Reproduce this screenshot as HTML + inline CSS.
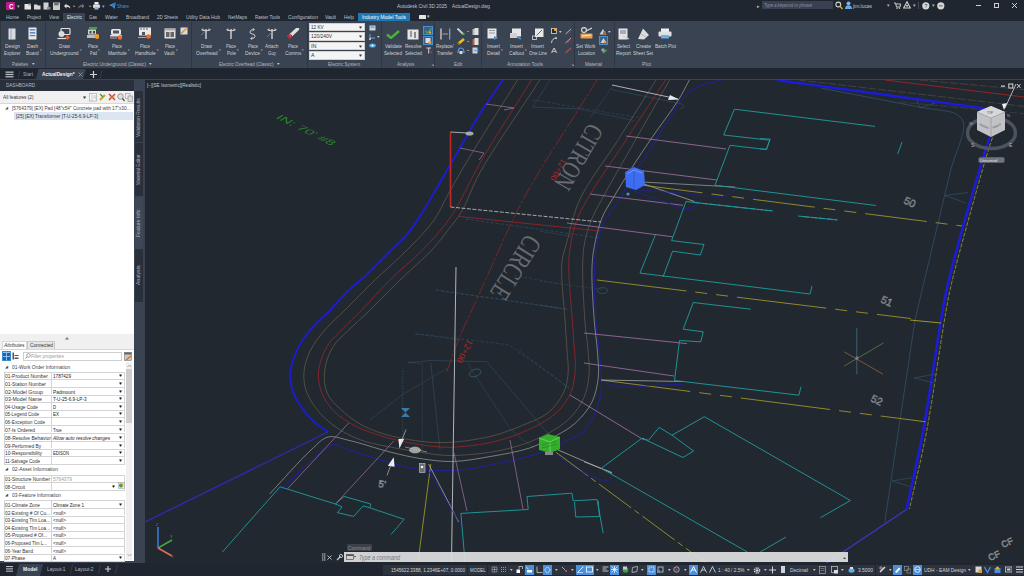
<!DOCTYPE html>
<html><head><meta charset="utf-8">
<style>
*{margin:0;padding:0;box-sizing:border-box}
html,body{width:1024px;height:576px;overflow:hidden;background:#20262f;font-family:"Liberation Sans",sans-serif}
.a{position:absolute}
.t{position:absolute;white-space:nowrap;line-height:1;font-size:6px;color:#c4c9d1}
#top{left:0;top:0;width:1024px;height:21px;background:#20262f}
#rib{left:0;top:21px;width:1024px;height:47px;background:#3a4352}
#tabs{left:0;top:68px;width:1024px;height:11px;background:#20262f}
#main{left:0;top:79px;width:1024px;height:484px;background:#3a4352}
#dwg{left:145px;top:80px;width:879px;height:482.5px;background:#222830;overflow:hidden}
#status{left:0;top:563px;width:1024px;height:13px;background:#20262f}
#panel{left:0;top:80px;width:134px;height:480.5px;background:#fff}
</style></head><body>
<div id="top" class="a"></div>
<div id="rib" class="a"></div>
<div id="tabs" class="a"></div>
<div id="main" class="a"></div>
<div id="dwg" class="a"></div>
<div id="panel" class="a"></div>
<div id="status" class="a"></div>
<div class="a" style="left:6px;top:2px;width:9px;height:8px;background:#c4168e;border-radius:1px"></div>
<div class="t" style="left:8.50px;top:3.07px;font-size:7px;color:#ffffff;font-weight:bold;font-style:normal;transform:scaleX(0.889);transform-origin:0 0;">C</div>
<div class="t" style="left:17.00px;top:3.55px;font-size:5px;color:#b8b8b8;font-weight:normal;font-style:normal;transform:scaleX(1.000);transform-origin:0 0;">▾</div>
<svg class="a" style="left:24px;top:3px;" width="8" height="7" viewBox="0 0 8 7"><rect x="0.5" y="1" width="6.5" height="5.5" fill="#e6e6e6"/><rect x="4.5" y="0.5" width="2.5" height="2" fill="#9a9a9a"/></svg>
<svg class="a" style="left:34px;top:3px;" width="7" height="7" viewBox="0 0 7 7"><path d="M0 1.5 H3 L4 2.5 H6.5 V6.5 H0Z" fill="#d8d8d8"/></svg>
<svg class="a" style="left:43px;top:2px;" width="8" height="8" viewBox="0 0 8 8"><rect x="0.5" y="0.5" width="5" height="7" fill="#d0d0d0"/><rect x="4" y="5" width="3.5" height="2.5" fill="#888"/></svg>
<svg class="a" style="left:53px;top:2px;" width="7" height="8" viewBox="0 0 7 8"><rect x="0" y="0.5" width="7" height="7.5" fill="#cacaca"/><rect x="1.2" y="0.8" width="4.5" height="2.5" fill="#6a6a6a"/></svg>
<svg class="a" style="left:63px;top:2px;" width="8" height="8" viewBox="0 0 8 8"><path d="M1 4 L3.5 1.5 V3 Q7 3 7.5 6.5 Q6 4.8 3.5 4.8 V6.5Z" fill="#dadada"/></svg>
<div class="t" style="left:72.50px;top:3.55px;font-size:5px;color:#b0b0b0;font-weight:normal;font-style:normal;transform:scaleX(1.133);transform-origin:0 0;">•</div>
<svg class="a" style="left:78px;top:2px;" width="7" height="8" viewBox="0 0 7 8"><path d="M6.5 4 L4 1.5 V3 Q0.5 3 0 6.5 Q1.5 4.8 4 4.8 V6.5Z" fill="#6b717a"/></svg>
<div class="t" style="left:88.50px;top:3.55px;font-size:5px;color:#b0b0b0;font-weight:normal;font-style:normal;transform:scaleX(1.133);transform-origin:0 0;">•</div>
<svg class="a" style="left:93px;top:2px;" width="7" height="8" viewBox="0 0 7 8"><rect x="1.5" y="0" width="4" height="2.5" fill="#eee"/><rect x="0" y="2.5" width="7" height="3.5" rx="1" fill="#dedede"/><rect x="1.5" y="5" width="4" height="2.5" fill="#8fb8e0"/></svg>
<div class="t" style="left:102.00px;top:3.55px;font-size:5px;color:#9aa0a8;font-weight:normal;font-style:normal;transform:scaleX(1.000);transform-origin:0 0;">▾</div>
<svg class="a" style="left:109px;top:2px;" width="7" height="7" viewBox="0 0 7 7"><path d="M0 3.2 L7 0 L5.5 7 L3.2 4.5 Z" fill="#3f8fd8"/><path d="M3.2 4.5 L7 0" stroke="#20262f" stroke-width="0.5"/></svg>
<div class="t" style="left:117.00px;top:3.76px;font-size:5.6px;color:#4f93d6;font-weight:normal;font-style:normal;transform:scaleX(0.803);transform-origin:0 0;">Share</div>
<div class="t" style="left:397.00px;top:3.76px;font-size:5.6px;color:#c0c5cd;font-weight:normal;font-style:normal;transform:scaleX(0.860);transform-origin:0 0;">Autodesk Civil 3D 2025</div>
<div class="t" style="left:452.00px;top:3.76px;font-size:5.6px;color:#c0c5cd;font-weight:normal;font-style:normal;transform:scaleX(0.849);transform-origin:0 0;">ActualDesign.dwg</div>
<div class="t" style="left:757.00px;top:4.05px;font-size:5px;color:#b8b8b8;font-weight:normal;font-style:normal;transform:scaleX(1.000);transform-origin:0 0;">▸</div>
<div class="a" style="left:762px;top:1px;width:71px;height:8px;background:#38414f;"></div>
<div class="t" style="left:764.00px;top:3.45px;font-size:5.2px;color:#8a929f;font-weight:normal;font-style:italic;transform:scaleX(0.805);transform-origin:0 0;">Type a keyword or phrase</div>
<svg class="a" style="left:835px;top:1px;" width="8" height="9" viewBox="0 0 8 9"><circle cx="3.3" cy="3.5" r="2.4" fill="none" stroke="#cfcfcf" stroke-width="1.1"/><path d="M5 5.3 L7.5 8" stroke="#d8b040" stroke-width="1.3"/></svg>
<svg class="a" style="left:845px;top:1px;" width="7" height="8" viewBox="0 0 7 8"><circle cx="3.5" cy="2.3" r="1.9" fill="#7ab4ec"/><path d="M0 8 Q0 4.2 3.5 4.2 Q7 4.2 7 8Z" fill="#6aa8e8"/></svg>
<div class="t" style="left:853.00px;top:3.76px;font-size:5.6px;color:#c0c5cd;font-weight:normal;font-style:normal;transform:scaleX(0.873);transform-origin:0 0;">jim.lucas</div>
<div class="t" style="left:887.00px;top:3.79px;font-size:4.5px;color:#b0b0b0;font-weight:normal;font-style:normal;transform:scaleX(1.000);transform-origin:0 0;">▾</div>
<svg class="a" style="left:894px;top:2px;" width="7" height="7" viewBox="0 0 7 7"><path d="M0 1 H1.5 L2.5 5 H6 L6.8 2 H2" fill="none" stroke="#d0d0d0" stroke-width="1"/><circle cx="3" cy="6.3" r="0.7" fill="#d0d0d0"/><circle cx="5.5" cy="6.3" r="0.7" fill="#d0d0d0"/></svg>
<svg class="a" style="left:903px;top:1px;" width="8" height="8" viewBox="0 0 8 8"><path d="M4 0.8 L7.4 7 L0.6 7 Z" fill="none" stroke="#d4d4d4" stroke-width="1.1"/><circle cx="4" cy="4.8" r="1" fill="#d4d4d4"/></svg>
<div class="t" style="left:912.50px;top:3.79px;font-size:4.5px;color:#b0b0b0;font-weight:normal;font-style:normal;transform:scaleX(1.000);transform-origin:0 0;">▾</div>
<div class="a" style="left:918px;top:2px;width:1px;height:7px;background:#454d5a;"></div>
<svg class="a" style="left:922px;top:1.5px;" width="8" height="8" viewBox="0 0 8 8"><circle cx="3.8" cy="3.8" r="3.6" fill="#d6d6d6"/><text x="2.4" y="6" font-size="5" fill="#333" font-family="Liberation Sans">?</text></svg>
<div class="t" style="left:931.50px;top:3.79px;font-size:4.5px;color:#b0b0b0;font-weight:normal;font-style:normal;transform:scaleX(1.000);transform-origin:0 0;">▾</div>
<svg class="a" style="left:937px;top:1.5px;" width="8" height="8" viewBox="0 0 8 8"><circle cx="3.8" cy="3.8" r="3.6" fill="#d6d6d6"/><rect x="2" y="3" width="3.6" height="1.6" fill="#888"/></svg>
<div class="a" style="left:976px;top:5px;width:5px;height:1px;background:#cfcfcf;"></div>
<div class="a" style="left:994px;top:3px;width:5px;height:5px;background:transparent;border:1px solid #cfcfcf"></div>
<svg class="a" style="left:1011px;top:2px;" width="7" height="7" viewBox="0 0 7 7"><path d="M1 1 L6 6 M6 1 L1 6" stroke="#cfcfcf" stroke-width="1"/></svg>
<div class="a" style="left:63px;top:13px;width:22px;height:8px;background:#3a4352;"></div>
<div class="a" style="left:358px;top:13px;width:52px;height:8px;background:#1e76b3;"></div>
<div class="t" style="left:6.00px;top:14.76px;font-size:5.6px;color:#bcc2cb;font-weight:normal;font-style:normal;transform:scaleX(0.871);transform-origin:0 0;">Home</div>
<div class="t" style="left:27.00px;top:14.76px;font-size:5.6px;color:#bcc2cb;font-weight:normal;font-style:normal;transform:scaleX(0.804);transform-origin:0 0;">Project</div>
<div class="t" style="left:49.00px;top:14.76px;font-size:5.6px;color:#bcc2cb;font-weight:normal;font-style:normal;transform:scaleX(0.831);transform-origin:0 0;">View</div>
<div class="t" style="left:89.00px;top:14.76px;font-size:5.6px;color:#bcc2cb;font-weight:normal;font-style:normal;transform:scaleX(0.779);transform-origin:0 0;">Gas</div>
<div class="t" style="left:105.00px;top:14.76px;font-size:5.6px;color:#bcc2cb;font-weight:normal;font-style:normal;transform:scaleX(0.883);transform-origin:0 0;">Water</div>
<div class="t" style="left:126.00px;top:14.76px;font-size:5.6px;color:#bcc2cb;font-weight:normal;font-style:normal;transform:scaleX(0.840);transform-origin:0 0;">Broadband</div>
<div class="t" style="left:157.00px;top:14.76px;font-size:5.6px;color:#bcc2cb;font-weight:normal;font-style:normal;transform:scaleX(0.804);transform-origin:0 0;">2D Sheets</div>
<div class="t" style="left:186.00px;top:14.76px;font-size:5.6px;color:#bcc2cb;font-weight:normal;font-style:normal;transform:scaleX(0.875);transform-origin:0 0;">Utility Data Hub</div>
<div class="t" style="left:228.00px;top:14.76px;font-size:5.6px;color:#bcc2cb;font-weight:normal;font-style:normal;transform:scaleX(0.849);transform-origin:0 0;">NetMaps</div>
<div class="t" style="left:255.00px;top:14.76px;font-size:5.6px;color:#bcc2cb;font-weight:normal;font-style:normal;transform:scaleX(0.806);transform-origin:0 0;">Raster Tools</div>
<div class="t" style="left:288.00px;top:14.76px;font-size:5.6px;color:#bcc2cb;font-weight:normal;font-style:normal;transform:scaleX(0.901);transform-origin:0 0;">Configuration</div>
<div class="t" style="left:325.00px;top:14.76px;font-size:5.6px;color:#bcc2cb;font-weight:normal;font-style:normal;transform:scaleX(0.891);transform-origin:0 0;">Vault</div>
<div class="t" style="left:344.00px;top:14.76px;font-size:5.6px;color:#bcc2cb;font-weight:normal;font-style:normal;transform:scaleX(0.868);transform-origin:0 0;">Help</div>
<div class="t" style="left:67.00px;top:14.76px;font-size:5.6px;color:#dde3ea;font-weight:normal;font-style:normal;transform:scaleX(0.818);transform-origin:0 0;">Electric</div>
<div class="t" style="left:362.00px;top:14.76px;font-size:5.6px;color:#ffffff;font-weight:normal;font-style:normal;transform:scaleX(0.859);transform-origin:0 0;">Industry Model Tools</div>
<div class="a" style="left:419px;top:15px;width:7px;height:4px;background:#e4e4e4;border-radius:0.5px"></div>
<div class="t" style="left:427.00px;top:15.29px;font-size:4.5px;color:#c0c0c0;font-weight:normal;font-style:normal;transform:scaleX(1.000);transform-origin:0 0;">▾</div>
<div class="a" style="left:45px;top:22px;width:1px;height:46px;background:#2f3641;"></div>
<div class="a" style="left:191px;top:22px;width:1px;height:46px;background:#2f3641;"></div>
<div class="a" style="left:307px;top:22px;width:1px;height:46px;background:#2f3641;"></div>
<div class="a" style="left:381px;top:22px;width:1px;height:46px;background:#2f3641;"></div>
<div class="a" style="left:434px;top:22px;width:1px;height:46px;background:#2f3641;"></div>
<div class="a" style="left:481px;top:22px;width:1px;height:46px;background:#2f3641;"></div>
<div class="a" style="left:574px;top:22px;width:1px;height:46px;background:#2f3641;"></div>
<div class="a" style="left:614px;top:22px;width:1px;height:46px;background:#2f3641;"></div>
<div class="a" style="left:0px;top:21px;width:1px;height:47px;background:#2f3641;"></div>
<svg class="a" style="left:8px;top:28px;" width="8" height="12" viewBox="0 0 8 12"><rect x="0.5" y="0.5" width="7" height="11" fill="#d8dadd"/><rect x="2.5" y="1" width="1" height="10" fill="#9ab"/></svg>
<svg class="a" style="left:28px;top:27px;" width="9" height="13" viewBox="0 0 9 13"><rect x="0.5" y="0.5" width="8" height="12" fill="#e6e8ea"/><rect x="1.8" y="2" width="5.4" height="1.6" fill="#5b8fd0"/><rect x="1.8" y="5" width="5.4" height="1.6" fill="#5b8fd0"/><rect x="1.8" y="8" width="5.4" height="1.2" fill="#777"/></svg>
<div class="t" style="left:5.00px;top:42.91px;font-size:6.1px;color:#ccd1d8;font-weight:normal;font-style:normal;transform:scaleX(0.791);transform-origin:0 0;">Design</div>
<div class="t" style="left:4.25px;top:49.71px;font-size:6.1px;color:#ccd1d8;font-weight:normal;font-style:normal;transform:scaleX(0.727);transform-origin:0 0;">Explorer</div>
<div class="t" style="left:27.00px;top:42.91px;font-size:6.1px;color:#ccd1d8;font-weight:normal;font-style:normal;transform:scaleX(0.773);transform-origin:0 0;">Dash</div>
<div class="t" style="left:26.20px;top:49.71px;font-size:6.1px;color:#ccd1d8;font-weight:normal;font-style:normal;transform:scaleX(0.775);transform-origin:0 0;">Board</div>
<div class="t" style="left:40.00px;top:49.13px;font-size:3.2px;color:#c8c8c8;font-weight:normal;font-style:normal;transform:scaleX(1.000);transform-origin:0 0;">▾</div>
<div class="t" style="left:12.00px;top:60.76px;font-size:6px;color:#b4b9c0;font-weight:normal;font-style:normal;transform:scaleX(0.738);transform-origin:0 0;">Palettes</div>
<div class="t" style="left:32.00px;top:62.58px;font-size:3.5px;color:#c8c8c8;font-weight:normal;font-style:normal;transform:scaleX(1.250);transform-origin:0 0;">▾</div>
<svg class="a" style="left:57px;top:28px;" width="14" height="12" viewBox="0 0 14 12"><rect x="4" y="0.5" width="9" height="6" rx="1" fill="none" stroke="#e0e0e0" stroke-width="1.2"/><circle cx="4.5" cy="6" r="3" fill="#dcdcdc"/><path d="M0.5 10.5 H9" stroke="#e0e0e0" stroke-width="1.2"/><path d="M10.5 7 L13 9.5 L10.5 12 L8 9.5Z" fill="#e8602c"/></svg>
<svg class="a" style="left:87px;top:27px;" width="12" height="13" viewBox="0 0 12 13"><rect x="2" y="0" width="8" height="2" fill="#3fa53f"/><rect x="1" y="2.5" width="8" height="5" fill="#cfcfcf"/><rect x="2.5" y="4" width="2" height="2.5" fill="#444"/><rect x="6" y="4" width="2" height="2.5" fill="#444"/><rect x="0" y="8" width="9" height="3" fill="#bdbdbd"/><circle cx="10" cy="9.5" r="2.4" fill="#f09a28"/></svg>
<svg class="a" style="left:110px;top:28px;" width="13" height="12" viewBox="0 0 13 12"><rect x="1" y="1" width="10" height="6" rx="1.5" fill="#e6e6e6"/><rect x="3" y="2.5" width="6" height="3" fill="#555"/><rect x="0" y="7" width="12" height="1.5" fill="#e0e0e0"/><path d="M0 10 H7" stroke="#c0a0a0" stroke-width="1"/><circle cx="10" cy="9.5" r="2.2" fill="#e8702c"/></svg>
<svg class="a" style="left:138px;top:27px;" width="14" height="13" viewBox="0 0 14 13"><rect x="1" y="0.5" width="12" height="8" fill="#e8e8e8"/><rect x="2" y="1.5" width="2" height="1" fill="#666"/><rect x="5" y="1.5" width="2" height="1" fill="#666"/><rect x="8" y="1.5" width="2" height="1" fill="#666"/><rect x="4" y="5" width="3" height="3" fill="#555"/><path d="M0 10.5 H8" stroke="#c0a0a0" stroke-width="1"/><circle cx="10.5" cy="9.5" r="2.3" fill="#e8702c"/></svg>
<svg class="a" style="left:164px;top:28px;" width="12" height="11" viewBox="0 0 12 11"><rect x="0.5" y="0.5" width="11" height="10" fill="#dedede"/><rect x="0.5" y="0.5" width="11" height="2" fill="#aaa"/><rect x="2" y="4" width="3.5" height="5" fill="#666"/><rect x="6.5" y="4" width="3.5" height="5" fill="#666"/></svg>
<svg class="a" style="left:180px;top:27px;" width="8" height="8" viewBox="0 0 8 8"><rect x="0.5" y="0.5" width="7" height="7" fill="#d9dde2"/><path d="M1 7 L7 1" stroke="#e8a040" stroke-width="1.5"/><path d="M1 6 L5 2" stroke="#6aa8e8" stroke-width="0.8"/></svg>
<div class="t" style="left:58.70px;top:42.91px;font-size:6.1px;color:#ccd1d8;font-weight:normal;font-style:normal;transform:scaleX(0.773);transform-origin:0 0;">Draw</div>
<div class="t" style="left:49.90px;top:49.71px;font-size:6.1px;color:#ccd1d8;font-weight:normal;font-style:normal;transform:scaleX(0.804);transform-origin:0 0;">Underground</div>
<div class="t" style="left:79.70px;top:49.13px;font-size:3.2px;color:#c8c8c8;font-weight:normal;font-style:normal;transform:scaleX(1.000);transform-origin:0 0;">▾</div>
<div class="t" style="left:88.00px;top:42.91px;font-size:6.1px;color:#ccd1d8;font-weight:normal;font-style:normal;transform:scaleX(0.656);transform-origin:0 0;">Place</div>
<div class="t" style="left:89.50px;top:49.71px;font-size:6.1px;color:#ccd1d8;font-weight:normal;font-style:normal;transform:scaleX(0.646);transform-origin:0 0;">Pad</div>
<div class="t" style="left:97.70px;top:49.13px;font-size:3.2px;color:#c8c8c8;font-weight:normal;font-style:normal;transform:scaleX(1.000);transform-origin:0 0;">▾</div>
<div class="t" style="left:112.00px;top:42.91px;font-size:6.1px;color:#ccd1d8;font-weight:normal;font-style:normal;transform:scaleX(0.656);transform-origin:0 0;">Place</div>
<div class="t" style="left:107.65px;top:49.71px;font-size:6.1px;color:#ccd1d8;font-weight:normal;font-style:normal;transform:scaleX(0.799);transform-origin:0 0;">Manhole</div>
<div class="t" style="left:127.55px;top:49.13px;font-size:3.2px;color:#c8c8c8;font-weight:normal;font-style:normal;transform:scaleX(1.000);transform-origin:0 0;">▾</div>
<div class="t" style="left:140.00px;top:42.91px;font-size:6.1px;color:#ccd1d8;font-weight:normal;font-style:normal;transform:scaleX(0.656);transform-origin:0 0;">Place</div>
<div class="t" style="left:134.60px;top:49.71px;font-size:6.1px;color:#ccd1d8;font-weight:normal;font-style:normal;transform:scaleX(0.797);transform-origin:0 0;">Handhole</div>
<div class="t" style="left:156.60px;top:49.13px;font-size:3.2px;color:#c8c8c8;font-weight:normal;font-style:normal;transform:scaleX(1.000);transform-origin:0 0;">▾</div>
<div class="t" style="left:164.50px;top:42.91px;font-size:6.1px;color:#ccd1d8;font-weight:normal;font-style:normal;transform:scaleX(0.656);transform-origin:0 0;">Place</div>
<div class="t" style="left:164.25px;top:49.71px;font-size:6.1px;color:#ccd1d8;font-weight:normal;font-style:normal;transform:scaleX(0.781);transform-origin:0 0;">Vault</div>
<div class="t" style="left:175.95px;top:49.13px;font-size:3.2px;color:#c8c8c8;font-weight:normal;font-style:normal;transform:scaleX(1.000);transform-origin:0 0;">▾</div>
<div class="t" style="left:83.00px;top:60.76px;font-size:6px;color:#b4b9c0;font-weight:normal;font-style:normal;transform:scaleX(0.774);transform-origin:0 0;">Electric Underground (Classic)</div>
<div class="t" style="left:149.00px;top:62.58px;font-size:3.5px;color:#c8c8c8;font-weight:normal;font-style:normal;transform:scaleX(1.250);transform-origin:0 0;">▾</div>
<svg class="a" style="left:201px;top:28px;" width="10" height="12" viewBox="0 0 10 12"><path d="M5 1 V11" stroke="#d4d4d4" stroke-width="1.4"/><path d="M0.5 1.5 Q5 4 9.5 1.5" stroke="#d4d4d4" stroke-width="1.1" fill="none"/><path d="M2 0.5 V3 M8 0.5 V3" stroke="#d4d4d4" stroke-width="0.9"/><path d="M0 7 L4 3.5" stroke="#5a8ad8" stroke-width="0.8"/></svg>
<svg class="a" style="left:226px;top:28px;" width="10" height="12" viewBox="0 0 10 12"><path d="M5 1 V11" stroke="#d4d4d4" stroke-width="1.4"/><path d="M0.5 1.5 Q5 4 9.5 1.5" stroke="#d4d4d4" stroke-width="1.1" fill="none"/><path d="M2 0.5 V3 M8 0.5 V3" stroke="#d4d4d4" stroke-width="0.9"/></svg>
<svg class="a" style="left:248px;top:28px;" width="9" height="12" viewBox="0 0 9 12"><path d="M6 1.5 Q2 1.5 2 4 Q2 6 4.5 6 Q7 6 7 8.5 Q7 10.5 3 10.5" fill="none" stroke="#cfcfcf" stroke-width="1"/><path d="M4.5 0 L6.5 1.5 L4.5 3 M4.5 9 L2.5 10.5 L4.5 12" fill="none" stroke="#cfcfcf" stroke-width="0.8"/></svg>
<svg class="a" style="left:267px;top:28px;" width="10" height="12" viewBox="0 0 10 12"><path d="M5 1 V11" stroke="#d4d4d4" stroke-width="1.4"/><path d="M0.5 1.5 Q5 4 9.5 1.5" stroke="#d4d4d4" stroke-width="1.1" fill="none"/><path d="M2 0.5 V3 M8 0.5 V3" stroke="#d4d4d4" stroke-width="0.9"/><path d="M0 9 L5 4" stroke="#5a8ad8" stroke-width="0.8"/></svg>
<svg class="a" style="left:287px;top:28px;" width="13" height="11" viewBox="0 0 13 11"><path d="M2.5 8.5 L10.5 1" stroke="#e0e0e0" stroke-width="3.4" stroke-linecap="round"/><circle cx="3" cy="8.5" r="2.2" fill="#c02020"/><circle cx="3.3" cy="8.1" r="0.8" fill="#e060c0"/></svg>
<div class="t" style="left:201.10px;top:42.91px;font-size:6.1px;color:#ccd1d8;font-weight:normal;font-style:normal;transform:scaleX(0.773);transform-origin:0 0;">Draw</div>
<div class="t" style="left:195.85px;top:49.71px;font-size:6.1px;color:#ccd1d8;font-weight:normal;font-style:normal;transform:scaleX(0.803);transform-origin:0 0;">Overhead</div>
<div class="t" style="left:218.55px;top:49.13px;font-size:3.2px;color:#c8c8c8;font-weight:normal;font-style:normal;transform:scaleX(1.000);transform-origin:0 0;">▾</div>
<div class="t" style="left:226.00px;top:42.91px;font-size:6.1px;color:#ccd1d8;font-weight:normal;font-style:normal;transform:scaleX(0.656);transform-origin:0 0;">Place</div>
<div class="t" style="left:226.50px;top:49.71px;font-size:6.1px;color:#ccd1d8;font-weight:normal;font-style:normal;transform:scaleX(0.738);transform-origin:0 0;">Pole</div>
<div class="t" style="left:236.70px;top:49.13px;font-size:3.2px;color:#c8c8c8;font-weight:normal;font-style:normal;transform:scaleX(1.000);transform-origin:0 0;">▾</div>
<div class="t" style="left:247.50px;top:42.91px;font-size:6.1px;color:#ccd1d8;font-weight:normal;font-style:normal;transform:scaleX(0.656);transform-origin:0 0;">Place</div>
<div class="t" style="left:245.00px;top:49.71px;font-size:6.1px;color:#ccd1d8;font-weight:normal;font-style:normal;transform:scaleX(0.805);transform-origin:0 0;">Device</div>
<div class="t" style="left:261.20px;top:49.13px;font-size:3.2px;color:#c8c8c8;font-weight:normal;font-style:normal;transform:scaleX(1.000);transform-origin:0 0;">▾</div>
<div class="t" style="left:264.95px;top:42.91px;font-size:6.1px;color:#ccd1d8;font-weight:normal;font-style:normal;transform:scaleX(0.781);transform-origin:0 0;">Attach</div>
<div class="t" style="left:267.70px;top:49.71px;font-size:6.1px;color:#ccd1d8;font-weight:normal;font-style:normal;transform:scaleX(0.715);transform-origin:0 0;">Guy</div>
<div class="t" style="left:287.80px;top:42.91px;font-size:6.1px;color:#ccd1d8;font-weight:normal;font-style:normal;transform:scaleX(0.656);transform-origin:0 0;">Place</div>
<div class="t" style="left:284.55px;top:49.71px;font-size:6.1px;color:#ccd1d8;font-weight:normal;font-style:normal;transform:scaleX(0.786);transform-origin:0 0;">Comms</div>
<div class="t" style="left:302.25px;top:49.13px;font-size:3.2px;color:#c8c8c8;font-weight:normal;font-style:normal;transform:scaleX(1.000);transform-origin:0 0;">▾</div>
<div class="t" style="left:218.60px;top:60.76px;font-size:6px;color:#b4b9c0;font-weight:normal;font-style:normal;transform:scaleX(0.750);transform-origin:0 0;">Electric Overhead (Classic)</div>
<div class="t" style="left:277.00px;top:62.58px;font-size:3.5px;color:#c8c8c8;font-weight:normal;font-style:normal;transform:scaleX(1.250);transform-origin:0 0;">▾</div>
<div class="a" style="left:308.5px;top:22.5px;width:56px;height:8.7px;background:#f4f4f4;border:0.5px solid #d0d0d0"></div>
<div class="t" style="left:311.00px;top:24.66px;font-size:5.6px;color:#333333;font-weight:normal;font-style:normal;transform:scaleX(0.820);transform-origin:0 0;">12 KV</div>
<div class="t" style="left:358.50px;top:24.75px;font-size:5px;color:#333;font-weight:normal;font-style:normal;transform:scaleX(1.167);transform-origin:0 0;">▾</div>
<div class="a" style="left:308.5px;top:32px;width:56px;height:8.7px;background:#f4f4f4;border:0.5px solid #d0d0d0"></div>
<div class="t" style="left:311.00px;top:34.16px;font-size:5.6px;color:#333333;font-weight:normal;font-style:normal;transform:scaleX(0.877);transform-origin:0 0;">120/240V</div>
<div class="t" style="left:358.50px;top:34.25px;font-size:5px;color:#333;font-weight:normal;font-style:normal;transform:scaleX(1.167);transform-origin:0 0;">▾</div>
<div class="a" style="left:308.5px;top:41.7px;width:56px;height:8.7px;background:#f4f4f4;border:0.5px solid #d0d0d0"></div>
<div class="t" style="left:311.00px;top:43.86px;font-size:5.6px;color:#333333;font-weight:normal;font-style:normal;transform:scaleX(0.983);transform-origin:0 0;">IN</div>
<div class="t" style="left:358.50px;top:43.95px;font-size:5px;color:#333;font-weight:normal;font-style:normal;transform:scaleX(1.167);transform-origin:0 0;">▾</div>
<div class="a" style="left:308.5px;top:51.2px;width:56px;height:8.7px;background:#f4f4f4;border:0.5px solid #d0d0d0"></div>
<div class="t" style="left:311.00px;top:53.36px;font-size:5.6px;color:#333333;font-weight:normal;font-style:normal;transform:scaleX(0.937);transform-origin:0 0;">A</div>
<div class="t" style="left:358.50px;top:53.45px;font-size:5px;color:#333;font-weight:normal;font-style:normal;transform:scaleX(1.167);transform-origin:0 0;">▾</div>
<svg class="a" style="left:369px;top:25px;" width="7" height="6" viewBox="0 0 7 6"><rect x="0.5" y="0.5" width="6" height="5" fill="#c8d4e0"/><rect x="1.5" y="1.5" width="4" height="1.2" fill="#5a8ad8"/></svg>
<svg class="a" style="left:369px;top:34px;" width="8" height="6" viewBox="0 0 8 6"><path d="M1 0 V4 H6" stroke="#6aa8e8" stroke-width="1" fill="none"/><circle cx="1" cy="5" r="1" fill="#ddd"/></svg>
<div class="t" style="left:377.00px;top:34.94px;font-size:4px;color:#c8c8c8;font-weight:normal;font-style:normal;transform:scaleX(1.250);transform-origin:0 0;">▾</div>
<svg class="a" style="left:369px;top:43px;" width="7" height="5" viewBox="0 0 7 5"><ellipse cx="3.5" cy="2.5" rx="3.3" ry="2" fill="#5aa8e8"/><ellipse cx="3.5" cy="2.5" rx="1" ry="1" fill="#fff"/></svg>
<div class="t" style="left:328.00px;top:60.76px;font-size:6px;color:#b4b9c0;font-weight:normal;font-style:normal;transform:scaleX(0.774);transform-origin:0 0;">Electric System</div>
<svg class="a" style="left:386px;top:30px;" width="14" height="9" viewBox="0 0 14 9"><path d="M1 4.5 L5 8 L13 1" fill="none" stroke="#4cb03c" stroke-width="2.4"/></svg>
<svg class="a" style="left:407px;top:29px;" width="12" height="11" viewBox="0 0 12 11"><rect x="0.5" y="0.5" width="11" height="10" fill="#e4e4e4"/><rect x="3" y="2" width="2" height="6" fill="#999"/><rect x="7" y="3" width="2" height="6" fill="#888"/></svg>
<div class="a" style="left:423.3px;top:26.4px;width:10px;height:8.8px;background:#3f5f84;border:0.8px solid #4a90d0"></div>
<svg class="a" style="left:425px;top:28px;" width="7" height="6" viewBox="0 0 7 6"><path d="M0.5 3 L2.5 5 L6.5 0.5" fill="none" stroke="#4cb03c" stroke-width="1.2"/><circle cx="5" cy="4.5" r="1.2" fill="#f0a030"/></svg>
<div class="a" style="left:423.3px;top:36.4px;width:10px;height:8.8px;background:#3f5f84;border:0.8px solid #4a90d0"></div>
<svg class="a" style="left:425px;top:38px;" width="7" height="6" viewBox="0 0 7 6"><rect x="0.5" y="0" width="5" height="5" fill="#ddd"/><circle cx="5" cy="4.5" r="1.5" fill="#f0a030"/></svg>
<svg class="a" style="left:426px;top:47px;" width="6" height="7" viewBox="0 0 6 7"><path d="M0.5 1 H5 M2.7 1 V6.5" stroke="#d0d0d0" stroke-width="1"/><circle cx="5" cy="5" r="0.8" fill="#e04040"/></svg>
<div class="t" style="left:384.50px;top:42.91px;font-size:6.1px;color:#ccd1d8;font-weight:normal;font-style:normal;transform:scaleX(0.788);transform-origin:0 0;">Validate</div>
<div class="t" style="left:384.00px;top:49.71px;font-size:6.1px;color:#ccd1d8;font-weight:normal;font-style:normal;transform:scaleX(0.759);transform-origin:0 0;">Selected</div>
<div class="t" style="left:405.20px;top:42.91px;font-size:6.1px;color:#ccd1d8;font-weight:normal;font-style:normal;transform:scaleX(0.754);transform-origin:0 0;">Resolve</div>
<div class="t" style="left:405.00px;top:49.71px;font-size:6.1px;color:#ccd1d8;font-weight:normal;font-style:normal;transform:scaleX(0.717);transform-origin:0 0;">Selected</div>
<div class="t" style="left:397.00px;top:60.76px;font-size:6px;color:#b4b9c0;font-weight:normal;font-style:normal;transform:scaleX(0.774);transform-origin:0 0;">Analysis</div>
<div class="t" style="left:430.50px;top:62.54px;font-size:4px;color:#c8c8c8;font-weight:normal;font-style:normal;transform:scaleX(1.000);transform-origin:0 0;">↘</div>
<svg class="a" style="left:440px;top:28px;" width="11" height="12" viewBox="0 0 11 12"><path d="M1 0.5 V11.5" stroke="#e0e0e0" stroke-width="1.2"/><path d="M9.7 0.5 V11.5" stroke="#78a8e0" stroke-width="1.2"/><path d="M2.5 6 H8" stroke="#bbb" stroke-width="0.8"/></svg>
<svg class="a" style="left:457px;top:28px;" width="8" height="7" viewBox="0 0 8 7"><path d="M0.5 0.5 L6 6" stroke="#d0d0d0" stroke-width="1.8"/><circle cx="6.5" cy="6" r="1.2" fill="#4cb03c"/></svg>
<svg class="a" style="left:457px;top:38px;" width="8" height="7" viewBox="0 0 8 7"><path d="M1 6 L7 1" stroke="#e8c020" stroke-width="2.6"/><circle cx="1.5" cy="5.5" r="1" fill="#555"/></svg>
<svg class="a" style="left:457px;top:47px;" width="8" height="7" viewBox="0 0 8 7"><path d="M1 6 Q1 1 4 1 Q7 1 7 6" fill="none" stroke="#5aa0e8" stroke-width="1.2"/><rect x="2.5" y="4" width="3" height="3" fill="#ddd"/></svg>
<div class="t" style="left:467.00px;top:29.54px;font-size:4px;color:#c8c8c8;font-weight:normal;font-style:normal;transform:scaleX(1.422);transform-origin:0 0;">•</div>
<div class="t" style="left:467.00px;top:39.54px;font-size:4px;color:#c8c8c8;font-weight:normal;font-style:normal;transform:scaleX(1.422);transform-origin:0 0;">•</div>
<div class="t" style="left:467.00px;top:49.04px;font-size:4px;color:#c8c8c8;font-weight:normal;font-style:normal;transform:scaleX(1.422);transform-origin:0 0;">•</div>
<svg class="a" style="left:472px;top:28px;" width="7" height="8" viewBox="0 0 7 8"><rect x="0.5" y="1" width="4" height="6" fill="#bbb"/><rect x="2.5" y="0" width="4" height="7" fill="#e0e0e0"/></svg>
<svg class="a" style="left:472px;top:38px;" width="7" height="8" viewBox="0 0 7 8"><rect x="0.5" y="1" width="4" height="6" fill="#c06030"/><rect x="2.5" y="0" width="4" height="7" fill="#e0e0e0"/></svg>
<svg class="a" style="left:472px;top:47px;" width="7" height="7" viewBox="0 0 7 7"><rect x="0.5" y="0.5" width="5" height="6" fill="#d0d0d0"/><path d="M2 3.5 H6.5" stroke="#5aa0e8" stroke-width="1.2"/></svg>
<div class="t" style="left:436.20px;top:42.91px;font-size:6.1px;color:#ccd1d8;font-weight:normal;font-style:normal;transform:scaleX(0.731);transform-origin:0 0;">Replace/</div>
<div class="t" style="left:437.10px;top:49.71px;font-size:6.1px;color:#ccd1d8;font-weight:normal;font-style:normal;transform:scaleX(0.703);transform-origin:0 0;">Transfer</div>
<div class="t" style="left:453.80px;top:60.76px;font-size:6px;color:#b4b9c0;font-weight:normal;font-style:normal;transform:scaleX(0.793);transform-origin:0 0;">Edit</div>
<svg class="a" style="left:487px;top:28px;" width="12" height="12" viewBox="0 0 12 12"><rect x="0.5" y="0.5" width="9" height="10" fill="#e6e6e6"/><rect x="2" y="2" width="6" height="1" fill="#999"/><rect x="2" y="4.5" width="6" height="1" fill="#999"/><path d="M7 8 L11 10 L7 12Z" fill="#4a90e0"/></svg>
<svg class="a" style="left:510px;top:28px;" width="12" height="12" viewBox="0 0 12 12"><rect x="2" y="0.5" width="9" height="8" fill="#e6e6e6"/><rect x="0" y="5" width="7" height="5" fill="#d0d0d0"/><path d="M7 9 L11 11" stroke="#4a90e0" stroke-width="1.5"/></svg>
<svg class="a" style="left:532px;top:28px;" width="12" height="12" viewBox="0 0 12 12"><rect x="3" y="0.5" width="8.5" height="8.5" fill="#e8e8e8"/><path d="M4.5 7.5 L10 2" stroke="#666" stroke-width="1"/><rect x="0.5" y="8" width="4" height="3.5" fill="none" stroke="#ddd" stroke-width="0.8"/></svg>
<svg class="a" style="left:551px;top:28px;" width="6" height="6" viewBox="0 0 6 6"><rect x="0.5" y="0.5" width="5" height="5" fill="#2a2a2a" stroke="#ddd" stroke-width="0.8"/><rect x="3" y="0.5" width="2.5" height="2.5" fill="#e0a030"/></svg>
<div class="t" style="left:558.50px;top:29.54px;font-size:4px;color:#c8c8c8;font-weight:normal;font-style:normal;transform:scaleX(1.250);transform-origin:0 0;">▾</div>
<svg class="a" style="left:551px;top:37px;" width="6" height="7" viewBox="0 0 6 7"><path d="M0.5 6 Q1 1 5.5 1" fill="none" stroke="#d8d8d8" stroke-width="0.9"/><circle cx="5" cy="1.2" r="0.9" fill="#ddd"/></svg>
<div class="t" style="left:551.00px;top:47.07px;font-size:7px;color:#d8d8d8;font-weight:normal;font-style:normal;transform:scaleX(1.284);transform-origin:0 0;">A</div>
<svg class="a" style="left:565px;top:28px;" width="7" height="7" viewBox="0 0 7 7"><path d="M0.5 6 L6 1" stroke="#d0d0d0" stroke-width="0.8"/><path d="M2 6.5 L6.5 3" stroke="#c03030" stroke-width="0.8"/></svg>
<svg class="a" style="left:565px;top:37px;" width="7" height="7" viewBox="0 0 7 7"><path d="M0.5 6 L6 1" stroke="#d0d0d0" stroke-width="0.8"/><path d="M2 6.5 L6.5 3" stroke="#c03030" stroke-width="0.8"/></svg>
<svg class="a" style="left:565px;top:47px;" width="7" height="7" viewBox="0 0 7 7"><path d="M0.5 6 L6 1" stroke="#b05050" stroke-width="1.1"/></svg>
<div class="t" style="left:487.00px;top:42.91px;font-size:6.1px;color:#ccd1d8;font-weight:normal;font-style:normal;transform:scaleX(0.852);transform-origin:0 0;">Insert</div>
<div class="t" style="left:487.00px;top:49.71px;font-size:6.1px;color:#ccd1d8;font-weight:normal;font-style:normal;transform:scaleX(0.834);transform-origin:0 0;">Detail</div>
<div class="t" style="left:501.20px;top:49.13px;font-size:3.2px;color:#c8c8c8;font-weight:normal;font-style:normal;transform:scaleX(1.000);transform-origin:0 0;">▾</div>
<div class="t" style="left:509.50px;top:42.91px;font-size:6.1px;color:#ccd1d8;font-weight:normal;font-style:normal;transform:scaleX(0.852);transform-origin:0 0;">Insert</div>
<div class="t" style="left:508.50px;top:49.71px;font-size:6.1px;color:#ccd1d8;font-weight:normal;font-style:normal;transform:scaleX(0.791);transform-origin:0 0;">Callout</div>
<div class="t" style="left:524.70px;top:49.13px;font-size:3.2px;color:#c8c8c8;font-weight:normal;font-style:normal;transform:scaleX(1.000);transform-origin:0 0;">▾</div>
<div class="t" style="left:531.20px;top:42.91px;font-size:6.1px;color:#ccd1d8;font-weight:normal;font-style:normal;transform:scaleX(0.852);transform-origin:0 0;">Insert</div>
<div class="t" style="left:528.70px;top:49.71px;font-size:6.1px;color:#ccd1d8;font-weight:normal;font-style:normal;transform:scaleX(0.728);transform-origin:0 0;">One Line</div>
<div class="t" style="left:507.00px;top:60.76px;font-size:6px;color:#b4b9c0;font-weight:normal;font-style:normal;transform:scaleX(0.813);transform-origin:0 0;">Annotation Tools</div>
<div class="t" style="left:570.50px;top:62.54px;font-size:4px;color:#c8c8c8;font-weight:normal;font-style:normal;transform:scaleX(1.000);transform-origin:0 0;">↘</div>
<svg class="a" style="left:580px;top:27px;" width="14" height="12" viewBox="0 0 14 12"><circle cx="4" cy="3" r="2.4" fill="none" stroke="#e0e0e0" stroke-width="1.1"/><path d="M6 4 L12 1" stroke="#e0e0e0" stroke-width="1.2"/><rect x="0.5" y="6.5" width="12" height="5" rx="1" fill="#e8a04c"/><path d="M2 9 L11 8" stroke="#fff" stroke-width="0.8"/></svg>
<svg class="a" style="left:599px;top:28px;" width="8" height="7" viewBox="0 0 8 7"><path d="M0.5 6.5 L4 1 L7.5 6.5Z" fill="#d0d0d0"/><rect x="4" y="3.5" width="3" height="3" fill="#c06030"/></svg>
<div class="t" style="left:607.50px;top:29.54px;font-size:4px;color:#c8c8c8;font-weight:normal;font-style:normal;transform:scaleX(1.250);transform-origin:0 0;">▾</div>
<div class="a" style="left:598.5px;top:36px;width:9.5px;height:8.5px;background:#3f5f84;border:0.8px solid #4a90d0"></div>
<svg class="a" style="left:600px;top:37px;" width="7" height="7" viewBox="0 0 7 7"><path d="M0.5 6 L3.5 1 L6.5 6Z" fill="#d0d0d0"/><circle cx="5" cy="5" r="1.3" fill="#f0a030"/></svg>
<svg class="a" style="left:600px;top:47px;" width="7" height="7" viewBox="0 0 7 7"><path d="M1 3 H5 M3 1 V5" stroke="#d0d0d0" stroke-width="0.8"/><path d="M3 6 L6.5 3" stroke="#4cb03c" stroke-width="1.4"/></svg>
<div class="t" style="left:576.25px;top:42.91px;font-size:6.1px;color:#ccd1d8;font-weight:normal;font-style:normal;transform:scaleX(0.781);transform-origin:0 0;">Set Work</div>
<div class="t" style="left:577.50px;top:49.71px;font-size:6.1px;color:#ccd1d8;font-weight:normal;font-style:normal;transform:scaleX(0.738);transform-origin:0 0;">Location</div>
<div class="t" style="left:585.00px;top:60.76px;font-size:6px;color:#b4b9c0;font-weight:normal;font-style:normal;transform:scaleX(0.796);transform-origin:0 0;">Material</div>
<svg class="a" style="left:618px;top:28px;" width="12" height="12" viewBox="0 0 12 12"><rect x="0.5" y="0.5" width="9" height="11" fill="#e4e4e4"/><rect x="2" y="2" width="6" height="4" fill="#aab"/><path d="M5 8 L11 11" stroke="#ccc" stroke-width="1.2"/></svg>
<svg class="a" style="left:637px;top:28px;" width="13" height="12" viewBox="0 0 13 12"><path d="M1 11 L6 0.5 L12 7 L7 11.5Z" fill="#dcdcdc"/><path d="M4 6 L9 9" stroke="#aaa" stroke-width="0.8"/></svg>
<svg class="a" style="left:658px;top:28px;" width="14" height="11" viewBox="0 0 14 11"><rect x="3" y="0.5" width="8" height="3.5" fill="#eee"/><rect x="0.5" y="3.5" width="13" height="5" rx="1" fill="#e0e0e0"/><rect x="3" y="7" width="8" height="3.5" fill="#6aacec"/></svg>
<div class="t" style="left:617.00px;top:42.91px;font-size:6.1px;color:#ccd1d8;font-weight:normal;font-style:normal;transform:scaleX(0.768);transform-origin:0 0;">Select</div>
<div class="t" style="left:616.00px;top:49.71px;font-size:6.1px;color:#ccd1d8;font-weight:normal;font-style:normal;transform:scaleX(0.820);transform-origin:0 0;">Report</div>
<div class="t" style="left:635.50px;top:42.91px;font-size:6.1px;color:#ccd1d8;font-weight:normal;font-style:normal;transform:scaleX(0.820);transform-origin:0 0;">Create</div>
<div class="t" style="left:633.00px;top:49.71px;font-size:6.1px;color:#ccd1d8;font-weight:normal;font-style:normal;transform:scaleX(0.747);transform-origin:0 0;">Sheet Set</div>
<div class="t" style="left:654.50px;top:42.91px;font-size:6.1px;color:#ccd1d8;font-weight:normal;font-style:normal;transform:scaleX(0.756);transform-origin:0 0;">Batch Plot</div>
<div class="t" style="left:642.00px;top:60.76px;font-size:6px;color:#b4b9c0;font-weight:normal;font-style:normal;transform:scaleX(0.870);transform-origin:0 0;">Plot</div>
<svg class="a" style="left:36px;top:69px;" width="50" height="10" viewBox="0 0 50 10"><path d="M2.5 0 H50 L47 10 H0Z" fill="#3a4352"/></svg>
<svg class="a" style="left:5px;top:71px;" width="9" height="7" viewBox="0 0 9 7"><rect x="0.5" y="0.5" width="8" height="1.3" fill="#b8bcc2"/><rect x="0.5" y="2.8" width="8" height="1.3" fill="#b8bcc2"/><rect x="0.5" y="5.1" width="8" height="1.3" fill="#b8bcc2"/></svg>
<svg class="a" style="left:17px;top:70px;" width="4" height="9" viewBox="0 0 4 9"><path d="M3 0.5 L1 8.5" stroke="#3a4250" stroke-width="0.8"/></svg>
<div class="t" style="left:23.00px;top:71.96px;font-size:5.6px;color:#aab2bd;font-weight:normal;font-style:normal;transform:scaleX(0.845);transform-origin:0 0;">Start</div>
<div class="t" style="left:42.00px;top:71.96px;font-size:5.6px;color:#f0f2f5;font-weight:bold;font-style:normal;transform:scaleX(0.857);transform-origin:0 0;">ActualDesign*</div>
<svg class="a" style="left:77.5px;top:71.5px;" width="5" height="5" viewBox="0 0 5 5"><path d="M0.5 0.5 L4.5 4.5 M4.5 0.5 L0.5 4.5" stroke="#9aa2ad" stroke-width="0.8"/></svg>
<svg class="a" style="left:89.5px;top:70.5px;" width="7" height="7" viewBox="0 0 7 7"><path d="M3.5 0 V7 M0 3.5 H7" stroke="#d0d4da" stroke-width="1.2"/></svg>
<svg class="a" style="left:99px;top:70px;" width="4" height="9" viewBox="0 0 4 9"><path d="M3 0.5 L1 8.5" stroke="#3a4250" stroke-width="0.8"/></svg>
<div class="a" style="left:0px;top:80px;width:134px;height:11px;background:#2a303b;"></div>
<div class="t" style="left:6.00px;top:83.06px;font-size:5.6px;color:#b4bac4;font-weight:normal;font-style:normal;transform:scaleX(0.818);transform-origin:0 0;">DASHBOARD</div>
<div class="a" style="left:0px;top:91px;width:134px;height:11.5px;background:#f0f0f0;"></div>
<div class="t" style="left:3.00px;top:95.16px;font-size:5.6px;color:#333333;font-weight:normal;font-style:normal;transform:scaleX(0.838);transform-origin:0 0;">All features (2)</div>
<div class="t" style="left:82.50px;top:95.05px;font-size:5px;color:#222;font-weight:normal;font-style:normal;transform:scaleX(1.167);transform-origin:0 0;">▾</div>
<svg class="a" style="left:89px;top:93px;" width="9" height="9" viewBox="0 0 9 9"><rect x="0.5" y="0.5" width="7" height="7.5" fill="#fafafa" stroke="#aaa" stroke-width="0.7"/><path d="M3 1 V8" stroke="#aaa" stroke-width="0.6"/><path d="M4.5 3 H7 M4.5 5 H7" stroke="#999" stroke-width="0.6"/></svg>
<svg class="a" style="left:98.5px;top:93px;" width="8" height="8" viewBox="0 0 8 8"><path d="M1 7 L6 2" stroke="#d8a020" stroke-width="2.2"/><path d="M1 1 L4 4" stroke="#3a9a3a" stroke-width="1.2"/></svg>
<svg class="a" style="left:107.5px;top:93px;" width="8" height="8" viewBox="0 0 8 8"><path d="M1 1 L7 7 M7 1 L1 7" stroke="#d03030" stroke-width="1.3"/><path d="M1 4 L7 4" stroke="#e0a040" stroke-width="0.8"/></svg>
<svg class="a" style="left:116.5px;top:92.5px;" width="8" height="9" viewBox="0 0 8 9"><circle cx="3.5" cy="3.5" r="2.8" fill="#ddd" stroke="#888" stroke-width="0.8"/><path d="M5.5 5.5 L7.5 8" stroke="#555" stroke-width="1.3"/></svg>
<svg class="a" style="left:125px;top:92.5px;" width="8" height="9" viewBox="0 0 8 9"><rect x="0.5" y="0.5" width="4.5" height="5" fill="#eee" stroke="#999" stroke-width="0.6"/><rect x="3" y="3" width="4.5" height="5.5" fill="#ddd" stroke="#888" stroke-width="0.6"/></svg>
<div class="a" style="left:0px;top:102.5px;width:134px;height:232px;background:#ffffff;"></div>
<div class="a" style="left:0px;top:102.5px;width:134px;height:0.6px;background:#d8d8d8;"></div>
<div class="t" style="left:4.50px;top:105.94px;font-size:4px;color:#555;font-weight:normal;font-style:normal;transform:scaleX(1.000);transform-origin:0 0;">◢</div>
<div class="t" style="left:12.00px;top:105.16px;font-size:6px;color:#3c3c3c;font-weight:normal;font-style:normal;transform:scaleX(0.784);transform-origin:0 0;">[5764379] [EX] Pad [48"x54" Concrete pad with 17"x30...</div>
<div class="a" style="left:13.7px;top:111.5px;width:119.5px;height:8.3px;background:#dce6f2;"></div>
<div class="t" style="left:16.00px;top:113.36px;font-size:6px;color:#333;font-weight:normal;font-style:normal;transform:scaleX(0.778);transform-origin:0 0;">[25] [EX] Transformer [T-U-25-6.9-LP-3]</div>
<div class="a" style="left:0px;top:334px;width:134px;height:7px;background:#f0f0f0;"></div>
<svg class="a" style="left:64.5px;top:336.5px;" width="4" height="3" viewBox="0 0 4 3"><path d="M0 2.5 L2 0 L4 2.5Z" fill="#777"/></svg>
<div class="a" style="left:0px;top:341px;width:134px;height:7.5px;background:#f0f0f0;"></div>
<div class="a" style="left:2px;top:340.7px;width:25px;height:8px;background:#ffffff;border:0.5px solid #d8d8d8;border-bottom:none"></div>
<div class="a" style="left:27.4px;top:341.2px;width:27.3px;height:7.5px;background:#e6e6e6;border:0.5px solid #c8c8c8;border-bottom:none"></div>
<div class="t" style="left:4.00px;top:343.06px;font-size:5.6px;color:#333;font-weight:normal;font-style:italic;transform:scaleX(0.867);transform-origin:0 0;">Attributes</div>
<div class="t" style="left:29.50px;top:343.06px;font-size:5.6px;color:#333;font-weight:normal;font-style:normal;transform:scaleX(0.850);transform-origin:0 0;">Connected</div>
<div class="a" style="left:0px;top:348.5px;width:134px;height:212.5px;background:#ffffff;border-top:0.5px solid #d8d8d8"></div>
<div class="a" style="left:1.6px;top:351px;width:9.4px;height:9.6px;background:#8ec3ef;border:0.6px solid #3d8ad0"></div>
<svg class="a" style="left:3px;top:352.5px;" width="7" height="7" viewBox="0 0 7 7"><rect x="0" y="0" width="3" height="3" fill="#1f5fb0"/><rect x="4" y="0" width="3" height="3" fill="#1f5fb0"/><rect x="0" y="4" width="3" height="3" fill="#1f5fb0"/><rect x="4" y="4" width="3" height="3" fill="#1f5fb0"/></svg>
<svg class="a" style="left:11.6px;top:352px;" width="7" height="8" viewBox="0 0 7 8"><rect x="0.5" y="0.5" width="1.5" height="7" fill="#555"/><rect x="2.5" y="3" width="4" height="1" fill="#555"/><rect x="2.5" y="5.5" width="4" height="1.5" fill="#555"/></svg>
<div class="a" style="left:22.6px;top:351.7px;width:99.2px;height:8.9px;background:#ffffff;border:0.6px solid #d0d0d0"></div>
<svg class="a" style="left:24.5px;top:352.8px;" width="6" height="6" viewBox="0 0 6 6"><circle cx="3.5" cy="2.5" r="1.8" fill="none" stroke="#777" stroke-width="0.7"/><path d="M2 4 L0.5 5.5" stroke="#777" stroke-width="0.8"/></svg>
<div class="t" style="left:30.80px;top:353.96px;font-size:5.6px;color:#9a9a9a;font-weight:normal;font-style:italic;transform:scaleX(0.844);transform-origin:0 0;">Filter properties</div>
<svg class="a" style="left:123.5px;top:351.5px;" width="8" height="9" viewBox="0 0 8 9"><rect x="0.5" y="0.5" width="7" height="8" fill="#c8c8c8" stroke="#777" stroke-width="0.6"/><rect x="0.5" y="0.5" width="7" height="2" fill="#666"/><path d="M2 8 L7 4" stroke="#e07020" stroke-width="1.4"/></svg>
<div class="a" style="left:125.5px;top:362px;width:6.5px;height:198px;background:#f0f0f0;"></div>
<div class="a" style="left:125.8px;top:369px;width:6px;height:54px;background:#cdcdcd;"></div>
<svg class="a" style="left:126.5px;top:364px;" width="5" height="4" viewBox="0 0 5 4"><path d="M0.5 3 L2.5 1 L4.5 3" fill="none" stroke="#888" stroke-width="0.7"/></svg>
<svg class="a" style="left:126.5px;top:553px;" width="5" height="4" viewBox="0 0 5 4"><path d="M0.5 1 L2.5 3 L4.5 1" fill="none" stroke="#888" stroke-width="0.7"/></svg>
<div class="t" style="left:4.50px;top:364.84px;font-size:4px;color:#444;font-weight:normal;font-style:normal;transform:scaleX(1.000);transform-origin:0 0;">◢</div>
<div class="t" style="left:11.60px;top:363.86px;font-size:6px;color:#444;font-weight:normal;font-style:normal;transform:scaleX(0.817);transform-origin:0 0;">01-Work Order Information</div>
<div class="a" style="left:3.6px;top:371.7px;width:121.2px;height:7.6px;background:transparent;border-top:0.7px solid #d4d4d4;border-left:0.7px solid #d4d4d4;border-right:0.7px solid #d4d4d4"></div>
<div class="a" style="left:3.6px;top:379.3px;width:121.2px;height:0.7px;background:#d4d4d4;"></div>
<div class="a" style="left:51.3px;top:371.7px;width:0.7px;height:7.6px;background:#d4d4d4;"></div>
<div class="t" style="left:4.80px;top:373.46px;font-size:6px;color:#333;font-weight:normal;font-style:normal;transform:scaleX(0.821);transform-origin:0 0;">01-Product Number</div>
<div class="t" style="left:52.80px;top:373.46px;font-size:6px;color:#222;font-weight:normal;font-style:normal;transform:scaleX(0.771);transform-origin:0 0;">1787429</div>
<div class="t" style="left:118.50px;top:373.45px;font-size:5px;color:#111;font-weight:normal;font-style:normal;transform:scaleX(1.167);transform-origin:0 0;">▾</div>
<div class="a" style="left:3.6px;top:379.3px;width:121.2px;height:7.6px;background:transparent;border-top:0.7px solid #d4d4d4;border-left:0.7px solid #d4d4d4;border-right:0.7px solid #d4d4d4"></div>
<div class="a" style="left:3.6px;top:386.90000000000003px;width:121.2px;height:0.7px;background:#d4d4d4;"></div>
<div class="a" style="left:51.3px;top:379.3px;width:0.7px;height:7.6px;background:#d4d4d4;"></div>
<div class="t" style="left:4.80px;top:381.06px;font-size:6px;color:#333;font-weight:normal;font-style:normal;transform:scaleX(0.814);transform-origin:0 0;">01-Station Number</div>
<div class="t" style="left:118.50px;top:381.05px;font-size:5px;color:#111;font-weight:normal;font-style:normal;transform:scaleX(1.167);transform-origin:0 0;">▾</div>
<div class="a" style="left:3.6px;top:386.90000000000003px;width:121.2px;height:7.6px;background:transparent;border-top:0.7px solid #d4d4d4;border-left:0.7px solid #d4d4d4;border-right:0.7px solid #d4d4d4"></div>
<div class="a" style="left:3.6px;top:394.50000000000006px;width:121.2px;height:0.7px;background:#d4d4d4;"></div>
<div class="a" style="left:51.3px;top:386.90000000000003px;width:0.7px;height:7.6px;background:#d4d4d4;"></div>
<div class="t" style="left:4.80px;top:388.66px;font-size:6px;color:#333;font-weight:normal;font-style:normal;transform:scaleX(0.876);transform-origin:0 0;">02-Model Group</div>
<div class="t" style="left:52.80px;top:388.66px;font-size:6px;color:#222;font-weight:normal;font-style:normal;transform:scaleX(0.804);transform-origin:0 0;">Padmount</div>
<div class="t" style="left:118.50px;top:388.65px;font-size:5px;color:#111;font-weight:normal;font-style:normal;transform:scaleX(1.167);transform-origin:0 0;">▾</div>
<div class="a" style="left:3.6px;top:394.50000000000006px;width:121.2px;height:7.6px;background:transparent;border-top:0.7px solid #d4d4d4;border-left:0.7px solid #d4d4d4;border-right:0.7px solid #d4d4d4"></div>
<div class="a" style="left:3.6px;top:402.1000000000001px;width:121.2px;height:0.7px;background:#d4d4d4;"></div>
<div class="a" style="left:51.3px;top:394.50000000000006px;width:0.7px;height:7.6px;background:#d4d4d4;"></div>
<div class="t" style="left:4.80px;top:396.26px;font-size:6px;color:#333;font-weight:normal;font-style:normal;transform:scaleX(0.867);transform-origin:0 0;">03-Model Name</div>
<div class="t" style="left:52.80px;top:396.26px;font-size:6px;color:#222;font-weight:normal;font-style:normal;transform:scaleX(0.773);transform-origin:0 0;">T-U-25-6.9-LP-3</div>
<div class="t" style="left:118.50px;top:396.25px;font-size:5px;color:#111;font-weight:normal;font-style:normal;transform:scaleX(1.167);transform-origin:0 0;">▾</div>
<div class="a" style="left:3.6px;top:402.1000000000001px;width:121.2px;height:7.6px;background:transparent;border-top:0.7px solid #d4d4d4;border-left:0.7px solid #d4d4d4;border-right:0.7px solid #d4d4d4"></div>
<div class="a" style="left:3.6px;top:409.7000000000001px;width:121.2px;height:0.7px;background:#d4d4d4;"></div>
<div class="a" style="left:51.3px;top:402.1000000000001px;width:0.7px;height:7.6px;background:#d4d4d4;"></div>
<div class="t" style="left:4.80px;top:403.86px;font-size:6px;color:#333;font-weight:normal;font-style:normal;transform:scaleX(0.785);transform-origin:0 0;">04-Usage Code</div>
<div class="t" style="left:52.80px;top:403.86px;font-size:6px;color:#222;font-weight:normal;font-style:normal;transform:scaleX(0.691);transform-origin:0 0;">D</div>
<div class="t" style="left:118.50px;top:403.85px;font-size:5px;color:#111;font-weight:normal;font-style:normal;transform:scaleX(1.167);transform-origin:0 0;">▾</div>
<div class="a" style="left:3.6px;top:409.7000000000001px;width:121.2px;height:7.6px;background:transparent;border-top:0.7px solid #d4d4d4;border-left:0.7px solid #d4d4d4;border-right:0.7px solid #d4d4d4"></div>
<div class="a" style="left:3.6px;top:417.3000000000001px;width:121.2px;height:0.7px;background:#d4d4d4;"></div>
<div class="a" style="left:51.3px;top:409.7000000000001px;width:0.7px;height:7.6px;background:#d4d4d4;"></div>
<div class="t" style="left:4.80px;top:411.46px;font-size:6px;color:#333;font-weight:normal;font-style:normal;transform:scaleX(0.760);transform-origin:0 0;">05-Legend Code</div>
<div class="t" style="left:52.80px;top:411.46px;font-size:6px;color:#222;font-weight:normal;font-style:normal;transform:scaleX(0.749);transform-origin:0 0;">EX</div>
<div class="t" style="left:118.50px;top:411.45px;font-size:5px;color:#111;font-weight:normal;font-style:normal;transform:scaleX(1.167);transform-origin:0 0;">▾</div>
<div class="a" style="left:3.6px;top:417.3000000000001px;width:121.2px;height:7.6px;background:transparent;border-top:0.7px solid #d4d4d4;border-left:0.7px solid #d4d4d4;border-right:0.7px solid #d4d4d4"></div>
<div class="a" style="left:3.6px;top:424.90000000000015px;width:121.2px;height:0.7px;background:#d4d4d4;"></div>
<div class="a" style="left:51.3px;top:417.3000000000001px;width:0.7px;height:7.6px;background:#d4d4d4;"></div>
<div class="t" style="left:4.80px;top:419.06px;font-size:6px;color:#333;font-weight:normal;font-style:normal;transform:scaleX(0.784);transform-origin:0 0;">06-Exception Code</div>
<div class="t" style="left:118.50px;top:419.05px;font-size:5px;color:#111;font-weight:normal;font-style:normal;transform:scaleX(1.167);transform-origin:0 0;">▾</div>
<div class="a" style="left:3.6px;top:424.90000000000015px;width:121.2px;height:7.6px;background:transparent;border-top:0.7px solid #d4d4d4;border-left:0.7px solid #d4d4d4;border-right:0.7px solid #d4d4d4"></div>
<div class="a" style="left:3.6px;top:432.50000000000017px;width:121.2px;height:0.7px;background:#d4d4d4;"></div>
<div class="a" style="left:51.3px;top:424.90000000000015px;width:0.7px;height:7.6px;background:#d4d4d4;"></div>
<div class="t" style="left:4.80px;top:426.66px;font-size:6px;color:#333;font-weight:normal;font-style:normal;transform:scaleX(0.810);transform-origin:0 0;">07-Is Ordered</div>
<div class="t" style="left:52.80px;top:426.66px;font-size:6px;color:#222;font-weight:normal;font-style:normal;transform:scaleX(0.701);transform-origin:0 0;">True</div>
<div class="t" style="left:118.50px;top:426.65px;font-size:5px;color:#111;font-weight:normal;font-style:normal;transform:scaleX(1.167);transform-origin:0 0;">▾</div>
<div class="a" style="left:3.6px;top:433.3px;width:121.2px;height:7.6px;background:transparent;border-top:0.7px solid #d4d4d4;border-left:0.7px solid #d4d4d4;border-right:0.7px solid #d4d4d4"></div>
<div class="a" style="left:3.6px;top:440.90000000000003px;width:121.2px;height:0.7px;background:#d4d4d4;"></div>
<div class="a" style="left:51.3px;top:433.3px;width:0.7px;height:7.6px;background:#d4d4d4;"></div>
<div class="t" style="left:4.80px;top:435.06px;font-size:6px;color:#333;font-weight:normal;font-style:normal;transform:scaleX(0.826);transform-origin:0 0;">08-Resolve Behavior</div>
<div class="t" style="left:52.80px;top:435.06px;font-size:6px;color:#222;font-weight:normal;font-style:italic;transform:scaleX(0.780);transform-origin:0 0;">Allow auto resolve changes</div>
<div class="t" style="left:118.50px;top:435.05px;font-size:5px;color:#111;font-weight:normal;font-style:normal;transform:scaleX(1.167);transform-origin:0 0;">▾</div>
<div class="a" style="left:3.6px;top:440.9px;width:121.2px;height:7.6px;background:transparent;border-top:0.7px solid #d4d4d4;border-left:0.7px solid #d4d4d4;border-right:0.7px solid #d4d4d4"></div>
<div class="a" style="left:3.6px;top:448.5px;width:121.2px;height:0.7px;background:#d4d4d4;"></div>
<div class="a" style="left:51.3px;top:440.9px;width:0.7px;height:7.6px;background:#d4d4d4;"></div>
<div class="t" style="left:4.80px;top:442.66px;font-size:6px;color:#333;font-weight:normal;font-style:normal;transform:scaleX(0.794);transform-origin:0 0;">09-Performed By</div>
<div class="t" style="left:118.50px;top:442.65px;font-size:5px;color:#111;font-weight:normal;font-style:normal;transform:scaleX(1.167);transform-origin:0 0;">▾</div>
<div class="a" style="left:3.6px;top:448.5px;width:121.2px;height:7.6px;background:transparent;border-top:0.7px solid #d4d4d4;border-left:0.7px solid #d4d4d4;border-right:0.7px solid #d4d4d4"></div>
<div class="a" style="left:3.6px;top:456.1px;width:121.2px;height:0.7px;background:#d4d4d4;"></div>
<div class="a" style="left:51.3px;top:448.5px;width:0.7px;height:7.6px;background:#d4d4d4;"></div>
<div class="t" style="left:4.80px;top:450.26px;font-size:6px;color:#333;font-weight:normal;font-style:normal;transform:scaleX(0.810);transform-origin:0 0;">10-Responsibility</div>
<div class="t" style="left:52.80px;top:450.26px;font-size:6px;color:#222;font-weight:normal;font-style:normal;transform:scaleX(0.695);transform-origin:0 0;">EDISON</div>
<div class="t" style="left:118.50px;top:450.25px;font-size:5px;color:#111;font-weight:normal;font-style:normal;transform:scaleX(1.167);transform-origin:0 0;">▾</div>
<div class="a" style="left:3.6px;top:456.1px;width:121.2px;height:7.6px;background:transparent;border-top:0.7px solid #d4d4d4;border-left:0.7px solid #d4d4d4;border-right:0.7px solid #d4d4d4"></div>
<div class="a" style="left:3.6px;top:463.70000000000005px;width:121.2px;height:0.7px;background:#d4d4d4;"></div>
<div class="a" style="left:51.3px;top:456.1px;width:0.7px;height:7.6px;background:#d4d4d4;"></div>
<div class="t" style="left:4.80px;top:457.86px;font-size:6px;color:#333;font-weight:normal;font-style:normal;transform:scaleX(0.762);transform-origin:0 0;">11-Salvage Code</div>
<div class="t" style="left:118.50px;top:457.85px;font-size:5px;color:#111;font-weight:normal;font-style:normal;transform:scaleX(1.167);transform-origin:0 0;">▾</div>
<div class="t" style="left:4.50px;top:466.84px;font-size:4px;color:#444;font-weight:normal;font-style:normal;transform:scaleX(1.000);transform-origin:0 0;">◢</div>
<div class="t" style="left:11.60px;top:465.86px;font-size:6px;color:#444;font-weight:normal;font-style:normal;transform:scaleX(0.831);transform-origin:0 0;">02-Asset Information</div>
<div class="a" style="left:3.6px;top:474.5px;width:121.2px;height:7.6px;background:transparent;border-top:0.7px solid #d4d4d4;border-left:0.7px solid #d4d4d4;border-right:0.7px solid #d4d4d4"></div>
<div class="a" style="left:3.6px;top:482.1px;width:121.2px;height:0.7px;background:#d4d4d4;"></div>
<div class="a" style="left:51.3px;top:474.5px;width:0.7px;height:7.6px;background:#d4d4d4;"></div>
<div class="t" style="left:4.80px;top:476.26px;font-size:6px;color:#333;font-weight:normal;font-style:normal;transform:scaleX(0.803);transform-origin:0 0;">01-Structure Number</div>
<div class="t" style="left:52.80px;top:476.26px;font-size:6px;color:#999;font-weight:normal;font-style:normal;transform:scaleX(0.813);transform-origin:0 0;">5764379</div>
<div class="a" style="left:3.6px;top:482.1px;width:121.2px;height:7.6px;background:transparent;border-top:0.7px solid #d4d4d4;border-left:0.7px solid #d4d4d4;border-right:0.7px solid #d4d4d4"></div>
<div class="a" style="left:3.6px;top:489.70000000000005px;width:121.2px;height:0.7px;background:#d4d4d4;"></div>
<div class="a" style="left:51.3px;top:482.1px;width:0.7px;height:7.6px;background:#d4d4d4;"></div>
<div class="t" style="left:4.80px;top:483.86px;font-size:6px;color:#333;font-weight:normal;font-style:normal;transform:scaleX(0.779);transform-origin:0 0;">08-Circuit</div>
<div class="t" style="left:111.50px;top:483.85px;font-size:5px;color:#111;font-weight:normal;font-style:normal;transform:scaleX(1.167);transform-origin:0 0;">▾</div>
<svg class="a" style="left:117.8px;top:482.40000000000003px;" width="7" height="7" viewBox="0 0 7 7"><rect x="0.5" y="0.5" width="6" height="6" fill="#e8e8e8" stroke="#999" stroke-width="0.5"/><circle cx="3" cy="3.5" r="2" fill="#4a9a4a"/><circle cx="4.5" cy="2.5" r="1" fill="#e0b020"/></svg>
<div class="t" style="left:4.50px;top:492.84px;font-size:4px;color:#444;font-weight:normal;font-style:normal;transform:scaleX(1.000);transform-origin:0 0;">◢</div>
<div class="t" style="left:11.60px;top:491.86px;font-size:6px;color:#444;font-weight:normal;font-style:normal;transform:scaleX(0.803);transform-origin:0 0;">03-Feature Information</div>
<div class="a" style="left:3.6px;top:500.3px;width:121.2px;height:7.6px;background:transparent;border-top:0.7px solid #d4d4d4;border-left:0.7px solid #d4d4d4;border-right:0.7px solid #d4d4d4"></div>
<div class="a" style="left:3.6px;top:507.90000000000003px;width:121.2px;height:0.7px;background:#d4d4d4;"></div>
<div class="a" style="left:51.3px;top:500.3px;width:0.7px;height:7.6px;background:#d4d4d4;"></div>
<div class="t" style="left:4.80px;top:502.06px;font-size:6px;color:#333;font-weight:normal;font-style:normal;transform:scaleX(0.789);transform-origin:0 0;">01-Climate Zone</div>
<div class="t" style="left:52.80px;top:502.06px;font-size:6px;color:#222;font-weight:normal;font-style:normal;transform:scaleX(0.762);transform-origin:0 0;">Climate Zone 1</div>
<div class="t" style="left:118.50px;top:502.05px;font-size:5px;color:#111;font-weight:normal;font-style:normal;transform:scaleX(1.167);transform-origin:0 0;">▾</div>
<div class="a" style="left:3.6px;top:507.90000000000003px;width:121.2px;height:7.6px;background:transparent;border-top:0.7px solid #d4d4d4;border-left:0.7px solid #d4d4d4;border-right:0.7px solid #d4d4d4"></div>
<div class="a" style="left:3.6px;top:515.5px;width:121.2px;height:0.7px;background:#d4d4d4;"></div>
<div class="a" style="left:51.3px;top:507.90000000000003px;width:0.7px;height:7.6px;background:#d4d4d4;"></div>
<div class="t" style="left:4.80px;top:509.66px;font-size:6px;color:#333;font-weight:normal;font-style:normal;transform:scaleX(0.789);transform-origin:0 0;">02-Existing # Of Cu...</div>
<div class="t" style="left:52.80px;top:509.66px;font-size:6px;color:#222;font-weight:normal;font-style:normal;transform:scaleX(0.795);transform-origin:0 0;">&lt;null></div>
<div class="a" style="left:3.6px;top:515.5px;width:121.2px;height:7.6px;background:transparent;border-top:0.7px solid #d4d4d4;border-left:0.7px solid #d4d4d4;border-right:0.7px solid #d4d4d4"></div>
<div class="a" style="left:3.6px;top:523.1px;width:121.2px;height:0.7px;background:#d4d4d4;"></div>
<div class="a" style="left:51.3px;top:515.5px;width:0.7px;height:7.6px;background:#d4d4d4;"></div>
<div class="t" style="left:4.80px;top:517.26px;font-size:6px;color:#333;font-weight:normal;font-style:normal;transform:scaleX(0.777);transform-origin:0 0;">03-Existing Tlm Loa...</div>
<div class="t" style="left:52.80px;top:517.26px;font-size:6px;color:#222;font-weight:normal;font-style:normal;transform:scaleX(0.795);transform-origin:0 0;">&lt;null></div>
<div class="a" style="left:3.6px;top:523.1px;width:121.2px;height:7.6px;background:transparent;border-top:0.7px solid #d4d4d4;border-left:0.7px solid #d4d4d4;border-right:0.7px solid #d4d4d4"></div>
<div class="a" style="left:3.6px;top:530.7px;width:121.2px;height:0.7px;background:#d4d4d4;"></div>
<div class="a" style="left:51.3px;top:523.1px;width:0.7px;height:7.6px;background:#d4d4d4;"></div>
<div class="t" style="left:4.80px;top:524.86px;font-size:6px;color:#333;font-weight:normal;font-style:normal;transform:scaleX(0.777);transform-origin:0 0;">04-Existing Tlm Loa...</div>
<div class="t" style="left:52.80px;top:524.86px;font-size:6px;color:#222;font-weight:normal;font-style:normal;transform:scaleX(0.795);transform-origin:0 0;">&lt;null></div>
<div class="a" style="left:3.6px;top:530.7px;width:121.2px;height:7.6px;background:transparent;border-top:0.7px solid #d4d4d4;border-left:0.7px solid #d4d4d4;border-right:0.7px solid #d4d4d4"></div>
<div class="a" style="left:3.6px;top:538.3000000000001px;width:121.2px;height:0.7px;background:#d4d4d4;"></div>
<div class="a" style="left:51.3px;top:530.7px;width:0.7px;height:7.6px;background:#d4d4d4;"></div>
<div class="t" style="left:4.80px;top:532.46px;font-size:6px;color:#333;font-weight:normal;font-style:normal;transform:scaleX(0.802);transform-origin:0 0;">05-Proposed # Of...</div>
<div class="t" style="left:52.80px;top:532.46px;font-size:6px;color:#222;font-weight:normal;font-style:normal;transform:scaleX(0.795);transform-origin:0 0;">&lt;null></div>
<div class="a" style="left:3.6px;top:538.3000000000001px;width:121.2px;height:7.6px;background:transparent;border-top:0.7px solid #d4d4d4;border-left:0.7px solid #d4d4d4;border-right:0.7px solid #d4d4d4"></div>
<div class="a" style="left:3.6px;top:545.9000000000001px;width:121.2px;height:0.7px;background:#d4d4d4;"></div>
<div class="a" style="left:51.3px;top:538.3000000000001px;width:0.7px;height:7.6px;background:#d4d4d4;"></div>
<div class="t" style="left:4.80px;top:540.06px;font-size:6px;color:#333;font-weight:normal;font-style:normal;transform:scaleX(0.751);transform-origin:0 0;">06-Proposed Tlm L...</div>
<div class="t" style="left:52.80px;top:540.06px;font-size:6px;color:#222;font-weight:normal;font-style:normal;transform:scaleX(0.795);transform-origin:0 0;">&lt;null></div>
<div class="a" style="left:3.6px;top:545.9000000000001px;width:121.2px;height:7.6px;background:transparent;border-top:0.7px solid #d4d4d4;border-left:0.7px solid #d4d4d4;border-right:0.7px solid #d4d4d4"></div>
<div class="a" style="left:3.6px;top:553.5000000000001px;width:121.2px;height:0.7px;background:#d4d4d4;"></div>
<div class="a" style="left:51.3px;top:545.9000000000001px;width:0.7px;height:7.6px;background:#d4d4d4;"></div>
<div class="t" style="left:4.80px;top:547.66px;font-size:6px;color:#333;font-weight:normal;font-style:normal;transform:scaleX(0.767);transform-origin:0 0;">06-Year Band</div>
<div class="t" style="left:52.80px;top:547.66px;font-size:6px;color:#222;font-weight:normal;font-style:normal;transform:scaleX(0.795);transform-origin:0 0;">&lt;null></div>
<div class="a" style="left:3.6px;top:553.5000000000001px;width:121.2px;height:7.6px;background:transparent;border-top:0.7px solid #d4d4d4;border-left:0.7px solid #d4d4d4;border-right:0.7px solid #d4d4d4"></div>
<div class="a" style="left:3.6px;top:561.1000000000001px;width:121.2px;height:0.7px;background:#d4d4d4;"></div>
<div class="a" style="left:51.3px;top:553.5000000000001px;width:0.7px;height:7.6px;background:#d4d4d4;"></div>
<div class="t" style="left:4.80px;top:555.26px;font-size:6px;color:#333;font-weight:normal;font-style:normal;transform:scaleX(0.779);transform-origin:0 0;">07-Phase</div>
<div class="t" style="left:52.80px;top:555.26px;font-size:6px;color:#222;font-weight:normal;font-style:normal;transform:scaleX(0.747);transform-origin:0 0;">A</div>
<div class="t" style="left:118.50px;top:555.25px;font-size:5px;color:#111;font-weight:normal;font-style:normal;transform:scaleX(1.167);transform-origin:0 0;">▾</div>
<div class="a" style="left:134.5px;top:90.7px;width:8px;height:51.6px;background:#2a303b;"></div>
<div class="a" style="left:134.5px;top:143px;width:8px;height:52.7px;background:#2a303b;"></div>
<div class="a" style="left:134.5px;top:197.8px;width:8px;height:50.8px;background:#3e4757;"></div>
<div class="a" style="left:134.5px;top:249.4px;width:8px;height:53px;background:#2a303b;"></div>
<div class="t" style="left:136.26px;top:136.60px;font-size:5.6px;color:#aeb5bf;transform:rotate(-90deg) scaleX(0.870);transform-origin:0 0">Validation Results</div>
<div class="t" style="left:136.26px;top:185.30px;font-size:5.6px;color:#aeb5bf;transform:rotate(-90deg) scaleX(0.849);transform-origin:0 0">Material Editor</div>
<div class="t" style="left:136.26px;top:237.00px;font-size:5.6px;color:#aeb5bf;transform:rotate(-90deg) scaleX(0.911);transform-origin:0 0">Feature Info</div>
<div class="t" style="left:136.26px;top:285.00px;font-size:5.6px;color:#aeb5bf;transform:rotate(-90deg) scaleX(0.936);transform-origin:0 0">Analysis</div>
<svg class="a" style="left:145px;top:80px" width="879" height="482.5" viewBox="145 80 879 482.5"><path d="M466.0 219.0 L600.0 238.0" fill="none" stroke="#34607a" stroke-width="0.6" opacity="0.8" stroke-dasharray="3 2" /><path d="M550.0 80.0 L532.5 107.0 L580.0 109.0" fill="none" stroke="#34607a" stroke-width="0.6" opacity="0.7" /><path d="M532.5 99.8 L640.0 118.0" fill="none" stroke="#34607a" stroke-width="0.6" opacity="0.7" stroke-dasharray="3 2" /><path d="M611.0 89.4 L682.0 104.0 L684.0 107.0 L680.0 109.2" fill="none" stroke="#34607a" stroke-width="0.6" opacity="0.7" /><path d="M580.0 109.2 L634.0 120.6" fill="none" stroke="#34607a" stroke-width="0.6" opacity="0.6" /><path d="M590.4 117.5 L613.3 85.2" fill="none" stroke="#34607a" stroke-width="0.6" opacity="0.6" /><path d="M435.6 290.0 L569.3 309.4" fill="none" stroke="#34607a" stroke-width="0.6" opacity="0.7" stroke-dasharray="3 2" /><path d="M436.5 290.0 L560.0 308.3" fill="none" stroke="#34607a" stroke-width="0.6" opacity="0.6" stroke-dasharray="3 2" /><path d="M514.4 275.4 L560.0 284.0" fill="none" stroke="#34607a" stroke-width="0.6" opacity="0.6" stroke-dasharray="3 2" /><path d="M414.6 333.8 L460.8 340.0" fill="none" stroke="#34607a" stroke-width="0.6" opacity="0.6" stroke-dasharray="3 2" /><path d="M416.2 333.8 L508.5 344.7 L571.8 389.7" fill="none" stroke="#34607a" stroke-width="0.6" opacity="0.7" stroke-dasharray="3 2" /><path d="M407.7 363.0 L429.6 360.5 L486.7 361.7 L545.0 430.0 L560.0 448.0" fill="none" stroke="#34607a" stroke-width="0.6" opacity="0.7" /><path d="M408.9 361.7 L422.3 364.0 L422.3 450.0" fill="none" stroke="#34607a" stroke-width="0.6" opacity="0.7" stroke-dasharray="2 1" /><path d="M430.8 363.0 L440.0 450.0" fill="none" stroke="#34607a" stroke-width="0.6" opacity="0.7" /><path d="M402.8 370.2 L402.8 440.0" fill="none" stroke="#34607a" stroke-width="0.6" opacity="0.8" stroke-dasharray="2 1" /><path d="M370.0 420.0 L402.8 394.5 L447.8 367.8" fill="none" stroke="#34607a" stroke-width="0.6" opacity="0.6" /><path d="M467.2 363.0 L511.0 430.0 L533.8 448.0" fill="none" stroke="#34607a" stroke-width="0.6" opacity="0.6" /><path d="M519.0 350.0 L571.0 389.6" fill="none" stroke="#34607a" stroke-width="0.6" opacity="0.6" stroke-dasharray="3 2" /><path d="M540.0 231.2 L571.2 236.5" fill="none" stroke="#34607a" stroke-width="0.6" opacity="0.6" /><path d="M540.0 281.2 L602.5 289.6" fill="none" stroke="#34607a" stroke-width="0.6" opacity="0.6" stroke-dasharray="3 2" /><ellipse cx="602.5" cy="290.6" rx="5" ry="3" fill="none" stroke="#34607a" stroke-width="0.6"/><path d="M540.0 305.2 L567.0 309.4" fill="none" stroke="#34607a" stroke-width="0.6" opacity="0.6" /><path d="M517.5 80.0 C500.9 106.7 480.3 139.1 467.8 160.0 C459.9 173.2 454.9 182.3 449.0 192.8 C443.5 202.5 439.9 211.9 433.4 221.0 C426.2 231.0 416.4 240.4 407.0 250.0 C397.0 260.1 385.4 269.9 375.0 280.0 C364.8 289.9 354.0 301.0 345.0 310.0 C337.6 317.4 330.7 323.0 324.8 330.0 C319.2 336.6 313.7 343.6 310.2 350.8 C307.0 357.5 304.6 364.9 304.0 371.7 C303.4 378.0 304.1 384.4 306.0 390.4 C308.1 396.8 312.0 403.3 316.5 409.0 C321.2 415.1 327.3 420.9 334.0 425.8 C341.3 431.1 350.1 435.9 359.0 439.4 C368.2 443.0 378.9 444.7 388.3 446.7 C396.9 448.5 404.6 449.6 413.0 451.0 C421.8 452.4 431.6 454.3 440.0 455.0 C447.4 455.6 452.7 455.7 460.8 455.2 C472.3 454.5 489.1 453.0 502.5 450.0 C515.5 447.1 528.6 443.0 540.0 437.5 C550.7 432.4 561.7 426.0 569.2 418.8 C575.7 412.5 580.4 405.4 583.8 397.9 C586.9 390.7 588.3 382.9 589.0 375.0 C589.8 366.9 588.6 358.7 588.0 350.0 C587.3 340.4 585.6 331.6 584.8 320.0 C583.7 303.9 582.2 276.9 582.7 262.5 C583.0 253.8 583.4 248.6 584.8 241.7 C586.2 234.7 588.3 227.6 591.0 220.8 C593.8 213.7 596.9 208.6 601.5 200.0 C609.2 185.5 622.9 162.1 634.0 142.5 C645.6 122.1 657.7 100.8 669.6 80.0" fill="none" stroke="#675c4a" stroke-width="0.7" opacity="1" /><path d="M531.5 80.0 C514.3 107.7 493.5 139.5 480.0 163.0 C470.4 179.7 463.7 195.5 456.9 206.9 C452.3 214.6 449.4 219.1 444.4 225.6 C438.3 233.4 430.7 241.6 422.5 250.0 C412.9 259.7 400.3 269.8 390.0 280.0 C380.1 289.8 370.4 301.1 361.7 310.0 C354.5 317.4 347.6 323.5 341.5 330.0 C336.1 335.7 330.7 340.1 326.9 346.7 C322.8 353.9 319.2 363.7 318.5 371.7 C317.9 378.9 319.2 386.0 321.7 392.5 C324.3 399.2 328.7 405.8 334.0 411.2 C339.6 417.0 347.3 421.7 355.0 425.8 C363.2 430.1 372.6 433.3 382.0 436.2 C391.9 439.3 403.2 441.7 413.3 443.5 C422.5 445.2 432.1 446.5 440.0 447.0 C446.2 447.4 450.0 447.5 456.7 447.0 C466.7 446.3 482.0 444.7 494.2 441.7 C506.3 438.7 518.8 434.3 529.6 429.2 C539.5 424.5 549.6 419.2 556.7 412.5 C563.1 406.5 568.1 399.3 571.2 391.7 C574.4 384.1 575.0 374.2 575.4 366.7 C575.7 360.6 574.8 356.4 574.4 350.0 C573.8 341.5 573.1 331.6 572.3 320.0 C571.2 303.9 568.3 276.9 568.8 262.5 C569.0 253.8 570.0 248.6 571.2 241.7 C572.5 234.7 574.0 227.6 576.5 220.8 C579.1 213.7 582.0 208.6 586.9 200.0 C595.5 185.0 612.9 160.0 626.0 140.0 C639.1 120.0 652.3 100.0 665.4 80.0" fill="none" stroke="#9a2626" stroke-width="0.8" opacity="1" /><path d="M539.8 80.0 C519.9 110.8 493.7 147.8 480.0 172.5 C471.4 188.0 467.6 201.4 461.6 211.6 C457.4 218.7 453.6 222.8 449.0 228.8 C443.8 235.5 438.8 242.6 431.9 250.0 C423.2 259.4 410.4 269.9 400.0 280.0 C389.8 289.9 379.2 301.1 370.0 310.0 C362.4 317.4 355.2 323.5 348.8 330.0 C343.0 335.7 337.0 340.2 333.0 346.7 C328.9 353.4 325.8 361.9 324.8 369.6 C323.8 377.1 324.2 385.8 326.9 392.5 C329.5 399.0 334.9 404.0 340.4 409.2 C346.7 415.2 354.9 421.3 363.3 425.8 C372.1 430.5 381.4 433.6 392.5 436.2 C406.3 439.6 424.0 442.5 440.0 442.6 C456.4 442.7 475.2 439.9 490.0 436.5 C502.4 433.6 513.1 429.3 523.3 425.0 C532.4 421.2 541.5 418.0 548.3 412.5 C554.5 407.4 559.7 400.4 563.0 393.8 C566.0 387.8 567.3 381.8 568.0 375.0 C568.9 367.3 567.5 358.7 567.0 350.0 C566.5 340.5 565.7 331.6 565.0 320.0 C564.0 303.9 560.6 276.8 561.9 262.5 C562.7 253.8 564.8 249.8 567.0 241.7 C570.2 230.2 572.9 214.7 579.6 200.0 C588.2 181.2 605.3 160.0 618.0 140.0 C630.7 120.0 643.3 100.0 656.0 80.0" fill="none" stroke="#675c4a" stroke-width="0.7" opacity="1" /><path d="M269.6 494.0 C283.4 479.3 299.9 460.0 311.0 450.0 C317.6 444.0 321.7 438.6 328.0 437.0 C334.3 435.4 340.9 438.6 349.0 440.4 C360.5 442.9 377.4 448.8 390.0 452.0 C400.7 454.7 409.8 456.9 420.0 458.5 C430.6 460.1 441.2 461.7 452.5 461.5 C465.0 461.2 479.0 458.5 492.0 456.2 C504.7 454.0 518.3 451.8 529.6 448.0 C539.6 444.6 548.7 439.9 556.7 435.4 C563.7 431.5 569.7 428.2 575.4 423.0 C581.6 417.3 588.2 409.8 592.0 402.0 C595.7 394.4 597.4 385.6 598.3 377.0 C599.2 368.2 597.9 359.2 597.3 350.0 C596.6 340.3 595.0 331.4 594.2 320.0 C593.1 304.8 591.4 281.1 592.0 266.7 C592.4 256.8 593.5 250.0 595.2 241.7 C597.0 233.3 599.4 224.0 602.5 216.7 C605.2 210.4 608.1 206.4 611.9 200.0 C617.3 190.9 625.1 178.2 632.0 167.5 C638.8 156.9 645.6 146.9 652.9 136.2 C660.8 124.8 671.4 111.2 677.9 100.8 C682.7 93.1 685.6 86.9 689.4 80.0" fill="none" stroke="#b4b4b4" stroke-width="0.7" opacity="0.85" /><path d="M274.0 496.0 C289.9 481.3 310.7 460.3 321.7 452.0 C326.9 448.1 329.6 445.0 334.0 444.6 C338.6 444.2 342.5 447.9 348.8 450.0 C359.2 453.5 378.4 459.6 391.0 463.0 C401.1 465.7 408.3 468.2 418.5 469.5 C431.0 471.0 446.8 471.2 460.8 470.0 C474.8 468.8 490.1 465.0 502.5 462.5 C512.5 460.4 521.0 458.8 529.6 456.2 C537.6 453.9 546.1 450.8 552.5 448.0 C557.4 445.9 560.4 444.1 565.0 441.7 C570.6 438.7 578.4 436.9 583.8 431.2 C590.8 423.9 597.2 409.1 600.0 398.0 C602.5 388.0 601.3 376.7 601.0 368.0 C600.7 361.2 599.7 356.8 599.0 350.0 C598.0 341.3 596.5 331.6 595.8 320.0 C594.8 303.9 593.8 276.9 594.6 262.5 C595.1 253.8 595.7 248.6 597.3 241.7 C599.0 234.7 601.1 227.5 604.6 220.8 C608.3 213.6 614.3 207.7 619.2 200.0 C624.9 191.0 631.3 176.9 636.2 169.6 C639.3 165.1 641.6 163.6 644.6 159.2 C649.0 152.8 654.4 141.9 659.2 134.2 C663.4 127.4 668.0 121.3 671.7 115.4 C674.8 110.3 676.9 104.8 680.0 100.8 C682.6 97.4 685.1 94.9 688.3 92.5 C691.7 89.9 695.4 87.9 700.0 86.0 C706.0 83.5 714.5 82.0 721.7 80.0" fill="none" stroke="#2020a4" stroke-width="1.0" opacity="1" /><path d="M502.9 80.0 C495.4 91.0 488.2 100.7 480.4 113.0 C471.1 127.8 459.5 148.9 451.2 163.0 C445.2 173.4 440.7 181.4 435.6 190.0 C430.9 198.0 426.8 205.6 422.0 213.0 C417.4 220.2 413.0 227.2 407.5 233.8 C401.9 240.4 395.2 246.1 388.8 252.5 C382.0 259.3 375.0 266.7 368.0 273.3 C361.1 279.8 353.4 285.7 347.0 292.0 C341.0 297.9 336.3 303.9 330.4 310.0 C324.1 316.6 315.9 322.9 310.2 330.0 C304.8 336.6 300.0 343.6 296.7 350.8 C293.6 357.5 291.0 364.9 290.4 371.7 C289.8 378.0 290.6 384.3 292.5 390.4 C294.6 396.9 298.8 403.6 302.9 409.2 C306.8 414.6 312.0 419.8 316.5 423.8 C320.3 427.1 324.2 429.2 328.0 432.0" fill="none" stroke="#1c1cd8" stroke-width="1.8" opacity="1" /><path d="M328.0 432.0 L145.0 522.0" fill="none" stroke="#2c2cb8" stroke-width="1.3" opacity="1" /><path d="M776.8 80.0 L1000.0 110.5 L987.0 145.0" fill="none" stroke="#1c1cd8" stroke-width="2.3" opacity="1" /><path d="M987.0 145.0 C980.0 168.7 972.7 192.2 966.0 216.0 C959.3 239.9 951.3 268.7 947.0 288.0 C944.1 300.7 943.4 306.1 941.0 320.0 C936.5 346.0 929.3 398.2 923.0 432.0 C917.7 460.3 912.0 483.7 906.5 509.5" fill="none" stroke="#1c1cd8" stroke-width="2.6" opacity="1" /><path d="M906.5 509.5 L825.0 564.0" fill="none" stroke="#3838c0" stroke-width="1.4" opacity="1" /><path d="M1002.0 112.0 C998.0 123.0 994.3 131.8 990.0 145.0 C983.8 164.1 976.1 192.2 969.5 216.0 C962.9 239.9 954.8 268.7 950.5 288.0 C947.6 300.7 946.9 306.1 944.5 320.0 C940.0 346.0 932.9 398.2 926.5 432.0 C921.1 460.1 915.2 483.3 909.5 509.0" fill="none" stroke="#a09a30" stroke-width="0.8" opacity="1" stroke-dasharray="4 1.5" /><path d="M950.7 170.0 L915.0 320.0 L884.8 522.0" fill="none" stroke="#34607a" stroke-width="0.6" opacity="1" /><path d="M945.0 195.5 L968.0 192.5" fill="none" stroke="#34607a" stroke-width="0.5" opacity="1" /><path d="M945.0 195.5 L966.0 203.0" fill="none" stroke="#34607a" stroke-width="0.5" opacity="1" /><path d="M914.0 378.0 L936.0 374.0" fill="none" stroke="#34607a" stroke-width="0.5" opacity="1" /><path d="M914.0 378.0 L934.0 383.0" fill="none" stroke="#34607a" stroke-width="0.5" opacity="1" /><path d="M892.0 481.0 L911.8 477.8" fill="none" stroke="#34607a" stroke-width="0.5" opacity="1" /><path d="M892.0 481.0 L910.0 486.5" fill="none" stroke="#34607a" stroke-width="0.5" opacity="1" /><path d="M885.0 80.0 L1024.0 97.0" fill="none" stroke="#9a2626" stroke-width="0.9" opacity="1" /><path d="M798.7 80.0 L1024.0 106.4" fill="none" stroke="#675c4a" stroke-width="0.6" opacity="0.8" stroke-dasharray="8 2" /><path d="M919.8 80.0 L1024.0 89.6" fill="none" stroke="#675c4a" stroke-width="0.6" opacity="0.8" stroke-dasharray="8 2" /><path d="M900.0 102.0 L1024.0 113.5" fill="none" stroke="#675c4a" stroke-width="0.5" opacity="0.7" stroke-dasharray="8 2" /><path d="M821.9 88.3 C855.4 94.7 897.9 102.9 922.4 107.6 C936.6 110.3 949.0 110.0 955.9 114.0 C960.0 116.4 962.6 118.4 963.6 123.0 C965.7 132.2 955.0 154.3 950.7 170.0" fill="none" stroke="#34607a" stroke-width="0.6" opacity="1" /><path d="M917.0 100.0 L920.0 108.0 L935.0 103.0" fill="none" stroke="#34607a" stroke-width="0.5" opacity="1" /><path d="M450.5 132.0 L450.5 207.0" fill="none" stroke="#c02828" stroke-width="1.6" opacity="1" /><path d="M450.5 132.0 L467.0 133.0" fill="none" stroke="#b8b8b8" stroke-width="0.9" opacity="1" /><ellipse cx="469.5" cy="133.5" rx="4" ry="2" fill="#a8a8a8"/><path d="M450.5 207.0 L601.0 222.0" fill="none" stroke="#c8c8c8" stroke-width="0.8" opacity="1" stroke-dasharray="4 1.5" /><path d="M459.0 216.5 L600.0 231.0" fill="none" stroke="#9a2626" stroke-width="0.8" opacity="1" /><path d="M597.0 80.0 C591.3 89.0 587.3 95.3 580.0 107.0 C566.5 128.7 539.6 168.8 522.8 200.0 C506.8 229.8 492.8 264.4 481.0 290.0 C472.3 309.1 464.5 325.0 458.4 340.0 C453.6 351.9 450.5 361.7 446.6 372.6" fill="none" stroke="#9a2626" stroke-width="0.7" opacity="1" stroke-dasharray="14 2 3 2" /><path d="M486.0 104.0 L514.0 108.0 L504.0 110.0" fill="none" stroke="#a474a4" stroke-width="0.7" opacity="1" /><path d="M460.0 148.0 L484.0 153.0 L479.0 160.0" fill="none" stroke="#a474a4" stroke-width="0.7" opacity="1" /><path d="M456.0 267.0 L451.5 562.0" fill="none" stroke="#c4c4c4" stroke-width="0.9" opacity="1" /><path d="M626.0 136.0 L726.0 149.0" fill="none" stroke="#a474a4" stroke-width="0.8" opacity="1" /><path d="M605.0 166.0 L717.0 180.0" fill="none" stroke="#a474a4" stroke-width="0.8" opacity="1" /><path d="M590.0 194.0 L683.0 205.3" fill="none" stroke="#a474a4" stroke-width="0.8" opacity="1" /><path d="M567.0 223.0 L672.6 236.8" fill="none" stroke="#a474a4" stroke-width="0.8" opacity="1" /><path d="M584.0 333.0 L687.0 343.6" fill="none" stroke="#a474a4" stroke-width="0.8" opacity="1" /><path d="M584.0 363.0 L674.0 376.0" fill="none" stroke="#a474a4" stroke-width="0.8" opacity="1" /><path d="M570.0 395.0 L644.0 440.0" fill="none" stroke="#a474a4" stroke-width="0.8" opacity="1" /><path d="M348.8 422.9 L287.7 488.7" fill="none" stroke="#a474a4" stroke-width="0.7" opacity="1" /><path d="M393.7 441.0 L335.4 504.0" fill="none" stroke="#a474a4" stroke-width="0.7" opacity="1" /><path d="M454.0 453.0 L467.0 511.0" fill="none" stroke="#a474a4" stroke-width="0.7" opacity="1" /><path d="M510.0 440.0 L523.0 509.0" fill="none" stroke="#a474a4" stroke-width="0.7" opacity="1" /><path d="M641.0 183.0 L694.5 201.5" fill="none" stroke="#b8b8b8" stroke-width="0.7" opacity="1" /><path d="M642.5 182.0 L735.0 187.0" fill="none" stroke="#b8b8b8" stroke-width="0.6" opacity="1" /><path d="M631.5 190.0 C641.0 193.3 650.6 196.8 660.0 200.0 C669.1 203.1 680.2 209.2 686.9 209.0 C690.9 208.9 695.0 207.1 696.4 205.3 C697.3 204.1 696.8 202.4 697.0 201.0" fill="none" stroke="#2020a4" stroke-width="0.8" opacity="1" /><path d="M632.0 189.4 C648.0 190.6 664.2 192.0 680.0 193.0 C695.4 194.0 716.6 197.9 725.8 195.6 C730.3 194.5 731.9 191.9 735.0 190.0" fill="none" stroke="#2020a4" stroke-width="0.7" opacity="1" /><path d="M641.0 185.0 L962.0 226.0" fill="none" stroke="#aaa22c" stroke-width="0.8" opacity="1" stroke-dasharray="62 9 12 9 12 9" /><path d="M597.0 280.0 L910.6 318.5" fill="none" stroke="#aaa22c" stroke-width="0.8" opacity="1" stroke-dasharray="90 9 12 9 12 9" /><path d="M601.0 380.0 L925.6 421.8" fill="none" stroke="#aaa22c" stroke-width="0.8" opacity="1" stroke-dasharray="90 9 12 9 12 9" /><path d="M910.0 320.0 L941.0 323.0" fill="none" stroke="#aaa22c" stroke-width="0.9" opacity="1" /><path d="M555.6 452.0 L704.5 562.0" fill="none" stroke="#aaa22c" stroke-width="0.8" opacity="1" stroke-dasharray="40 4 6 4" /><path d="M430.8 464.0 L418.0 562.0" fill="none" stroke="#aaa22c" stroke-width="0.8" opacity="1" /><path d="M601.0 380.0 L683.0 381.5" fill="none" stroke="#b8b8b8" stroke-width="0.7" opacity="1" /><path d="M599.0 380.0 C605.3 382.2 610.3 385.5 618.0 386.6 C629.1 388.3 648.1 385.4 660.0 385.0 C668.8 384.7 675.3 384.7 683.0 384.5" fill="none" stroke="#2020a4" stroke-width="0.8" opacity="1" /><path d="M584.0 461.8 L612.0 472.5" fill="none" stroke="#b8b8b8" stroke-width="0.7" opacity="1" /><path d="M428.6 464.0 L458.7 522.0" fill="none" stroke="#b8b8b8" stroke-width="0.7" opacity="1" /><path d="M426.5 468.0 C431.0 475.3 435.4 482.4 440.0 490.0 C444.9 498.1 450.8 508.6 455.0 515.0 C457.7 519.1 459.7 521.7 462.0 525.0" fill="none" stroke="#2020a4" stroke-width="0.8" opacity="1" /><path d="M557.0 449.5 L612.0 473.2" fill="none" stroke="#b8b8b8" stroke-width="0.7" opacity="1" /><path d="M554.5 454.5 C563.7 460.3 572.5 467.6 582.0 472.0 C590.9 476.2 605.4 482.5 609.5 480.8 C611.3 480.0 611.2 477.4 612.0 475.8" fill="none" stroke="#2020a4" stroke-width="0.8" opacity="1" /><path d="M612.0 85.0 L678.0 99.0" fill="none" stroke="#d0d0d0" stroke-width="0.8" opacity="1" /><path d="M670 95 L679 99.5 L668 100Z" fill="#e8e8e8"/><path d="M398.4 439.1 L404.1 439.1 L399.4 448.6Z" fill="#f0f0f0"/><path d="M387.9 465.8 L393.7 457.2 L394.6 466.8Z" fill="#f0f0f0"/><path d="M406.0 429.5 L400.0 445.0" fill="none" stroke="#d0d0d0" stroke-width="0.6" opacity="1" /><path d="M387.0 475.4 L392.0 462.0" fill="none" stroke="#d0d0d0" stroke-width="0.6" opacity="1" /><path d="M1016.0 84.0 L1005.0 108.0" fill="none" stroke="#d8d8d8" stroke-width="0.8" opacity="1" /><path d="M1002 104 L1007 103 L1004 110Z" fill="#f0f0f0"/><path d="M875.0 126.4 L734.4 109.2 L723.7 135.0 L769.6 140.2 L766.6 149.6 L730.0 145.3 L715.0 185.3 L876.0 205.5" fill="none" stroke="#1e9e9e" stroke-width="0.9" opacity="1" /><path d="M902.0 142.0 L897.7 154.0" fill="none" stroke="#1e9e9e" stroke-width="0.9" opacity="1" /><path d="M773.0 211.0 L686.0 201.5 L671.6 240.6 L704.0 244.5 L700.3 255.0 L672.6 251.2 L663.0 277.0" fill="none" stroke="#1e9e9e" stroke-width="0.9" opacity="1" /><path d="M655.4 234.9 L640.0 273.1 L810.0 294.0 L812.0 286.0" fill="none" stroke="#1e9e9e" stroke-width="0.9" opacity="1" /><path d="M693.6 202.5 L773.0 211.0" fill="none" stroke="#1e9e9e" stroke-width="0.9" opacity="1" stroke-dasharray="6 2" /><path d="M803.0 216.6 L837.5 219.7" fill="none" stroke="#1e9e9e" stroke-width="0.9" opacity="1" stroke-dasharray="6 2" /><path d="M750.8 309.2 L693.2 302.5 L683.2 329.2 L703.2 331.8 L700.8 341.8 L679.5 340.5" fill="none" stroke="#1e9e9e" stroke-width="0.9" opacity="1" /><path d="M679.5 340.5 L674.5 380.5 L798.9 395.2 L801.0 386.6" fill="none" stroke="#1e9e9e" stroke-width="0.9" opacity="1" /><path d="M601.2 468.3 L642.0 438.2 L648.5 440.3 L659.2 427.4 L672.0 435.2 L704.3 416.7 L850.4 500.5 L820.4 517.7" fill="none" stroke="#1e9e9e" stroke-width="0.9" opacity="1" /><path d="M642.0 438.2 L683.0 457.5 L693.6 451.0 L672.0 435.2" fill="none" stroke="#1e9e9e" stroke-width="0.9" opacity="1" /><path d="M601.2 468.3 L747.3 552.0" fill="none" stroke="#1e9e9e" stroke-width="0.9" opacity="1" /><path d="M760.2 552.0 L786.0 537.0" fill="none" stroke="#1e9e9e" stroke-width="0.9" opacity="1" /><path d="M222.4 552.0 L280.0 486.8 L335.4 504.0 L342.1 506.9 L337.3 512.6 L353.6 516.4 L363.1 505.9 L369.8 507.8 L404.2 519.3 L391.0 534.5" fill="none" stroke="#1e9e9e" stroke-width="0.9" opacity="1" /><path d="M335.4 504.0 L344.0 496.4 L370.7 504.0 L369.8 507.8" fill="none" stroke="#1e9e9e" stroke-width="0.9" opacity="1" /><path d="M465.0 562.0 L460.9 513.4 L528.2 509.5 L527.0 496.5 L572.0 493.2 L573.2 500.8 L597.0 499.5 L603.2 533.2" fill="none" stroke="#1e9e9e" stroke-width="0.9" opacity="1" /><path d="M574.5 502.0 L575.8 517.0 L599.5 516.5 L598.2 500.8" fill="none" stroke="#1e9e9e" stroke-width="0.9" opacity="1" /><path d="M760.0 138.6 L770.3 139.0 L766.4 148.9 L760.0 149.0" fill="none" stroke="#1e9e9e" stroke-width="0.8" opacity="1" /><path d="M798.0 216.0 L837.0 220.0" fill="none" stroke="#1e9e9e" stroke-width="0.9" opacity="1" /><g><path d="M625 172 L634 167 L644 171 L645 185 L636 190 L626 187Z" fill="#3d6ef0"/><path d="M627 174 L634 170 L642 173" stroke="#7aa0ff" stroke-width="0.8" fill="none"/><path d="M634 171 V188" stroke="#2a55d0" stroke-width="0.7"/></g><circle cx="628" cy="194" r="1.6" fill="#3d8ef0"/><g><path d="M539 438 L548 434 L560 437 L560 449 L550 453 L539 450Z" fill="#32b02a"/><path d="M539 438 L550 442 L560 437 M550 442 V453" stroke="#9ae090" stroke-width="0.6" fill="none"/><path d="M542 445 L557 441 M542 448 L557 444" stroke="#1f7a1a" stroke-width="0.5"/><rect x="545" y="452" width="8" height="3" fill="#888"/></g><ellipse cx="415" cy="450" rx="5.5" ry="3" fill="#a0a0a0" stroke="#d0d0d0" stroke-width="0.5"/><path d="M405.0 447.0 L427.0 452.0" fill="none" stroke="#b8b8b8" stroke-width="0.6" opacity="1" /><rect x="419.5" y="463.5" width="5.5" height="9" fill="#6a6e74" stroke="#c8c8c8" stroke-width="0.6"/><circle cx="422" cy="467" r="1.3" fill="#eee"/><path d="M401 408 H410 L405.5 412.5Z M401 417 H410 L405.5 412.5Z" fill="#3a7aa8"/><path d="M856.8 328.0 L856.8 374.2" fill="none" stroke="#4a7a98" stroke-width="0.7" opacity="1" /><path d="M844.2 351.8 L883.0 374.2" fill="none" stroke="#a86a40" stroke-width="0.7" opacity="1" /><path d="M844.2 366.0 L883.5 343.0" fill="none" stroke="#6a8a40" stroke-width="0.7" opacity="1" /><circle cx="857" cy="358" r="1.2" fill="none" stroke="#bbb" stroke-width="0.5"/><ellipse cx="991.5" cy="133" rx="24" ry="15.5" fill="none" stroke="#4c535c" stroke-width="3.4"/><path d="M977 112 L991 106 L1005 112 L1005 130 L991 137 L977 130Z" fill="#c0c2c5"/><path d="M977 112 L991 118 L1005 112 L991 106Z" fill="#d6d7d9"/><path d="M977 112 L991 118 L1005 112 M991 118 V137" stroke="#8d9196" stroke-width="0.6" fill="none"/><text x="987" y="114" font-size="3" fill="#555" font-family="Liberation Sans">TOP</text><text x="979" y="126" font-size="3" fill="#555" font-family="Liberation Sans" transform="rotate(25 981 126)">FRONT</text><text x="993" y="128" font-size="3" fill="#555" font-family="Liberation Sans" transform="rotate(-25 995 128)">RIGHT</text><text x="969" y="125" font-size="4" fill="#9aa0a8" font-family="Liberation Sans">W</text><text x="971" y="147" font-size="5" fill="#b0b4ba" font-family="Liberation Sans">S</text><text x="1009" y="147" font-size="5" fill="#b0b4ba" font-family="Liberation Sans">E</text><text x="1007" y="117" font-size="4" fill="#9aa0a8" font-family="Liberation Sans">N</text><rect x="978.5" y="157.3" width="26" height="5.4" rx="1.5" fill="#6e757e"/><text x="980" y="161.6" font-size="4" fill="#e0e0e0" font-family="Liberation Sans">Unnamed</text><rect x="1001" y="85.5" width="4" height="1.2" fill="#d8d8d8"/><rect x="1008.8" y="84" width="4" height="4" fill="none" stroke="#d8d8d8" stroke-width="1"/><path d="M1017 84 L1020.5 88 M1020.5 84 L1017 88" stroke="#d8d8d8" stroke-width="0.9"/><path d="M158 548 V527" stroke="#3a7ad0" stroke-width="1.6"/><path d="M158 548 L172 540" stroke="#40a840" stroke-width="1.6"/><path d="M158 548 L172 556" stroke="#e07060" stroke-width="1.6"/><text x="156" y="526" font-size="4" fill="#3a7ad0" font-family="Liberation Sans">Z</text><text x="170" y="538" font-size="4" fill="#40a840" font-family="Liberation Sans">Y</text><text x="171" y="558" font-size="4" fill="#a03030" font-family="Liberation Sans">X</text><text x="0" y="0" transform="translate(589,122) rotate(120)" font-family="Liberation Serif" font-size="26" fill="#686c72" textLength="71" lengthAdjust="spacingAndGlyphs">CITRON</text><text x="0" y="0" transform="translate(526.5,233) rotate(122)" font-family="Liberation Serif" font-size="28" fill="#686c72" textLength="70" lengthAdjust="spacingAndGlyphs">CIRCLE</text><text x="0" y="0" transform="translate(562,158) rotate(120)" font-family="Liberation Serif" font-size="9" fill="#b02a2a" textLength="24" lengthAdjust="spacingAndGlyphs">12+00</text><text x="0" y="0" transform="translate(468,339) rotate(118)" font-family="Liberation Serif" font-size="9" fill="#b02a2a" textLength="25" lengthAdjust="spacingAndGlyphs">12+00</text><ellipse cx="462.4" cy="375" rx="6" ry="3.5" fill="none" stroke="#3a6a80" stroke-width="0.6" transform="rotate(-20 463 338)"/><text x="0" y="0" transform="matrix(0.895,0.445,-0.85,0.53,275,118)" font-family="Liberation Sans" font-size="10" fill="#2a9a2a" opacity="0.8" textLength="63" lengthAdjust="spacingAndGlyphs">IN:  70'  #8</text><text x="0" y="0" transform="translate(903,203) rotate(25)" font-family="Liberation Sans" font-size="10.5" fill="none" stroke="#9aa0a6" stroke-width="0.5">50</text><text x="0" y="0" transform="translate(880,302) rotate(25)" font-family="Liberation Sans" font-size="10.5" fill="none" stroke="#9aa0a6" stroke-width="0.5">51</text><text x="0" y="0" transform="translate(870,401) rotate(25)" font-family="Liberation Sans" font-size="10.5" fill="none" stroke="#9aa0a6" stroke-width="0.5">52</text><text x="0" y="0" transform="translate(378,487) rotate(8)" font-family="Liberation Sans" font-size="10" fill="none" stroke="#a0a4a8" stroke-width="0.5">5'</text><text x="0" y="0" transform="translate(990,561) rotate(-25)" font-family="Liberation Sans" font-size="9" fill="none" stroke="#a0a4a8" stroke-width="0.5">CF</text><text x="0" y="0" transform="translate(1003,548) rotate(-25)" font-family="Liberation Sans" font-size="9" fill="none" stroke="#a0a4a8" stroke-width="0.5">CF</text><text x="147" y="87" font-family="Liberation Sans" font-size="5" fill="#c4c8ce" textLength="54" lengthAdjust="spacingAndGlyphs">[−][SE Isometric][Realistic]</text></svg>
<div class="a" style="left:346.7px;top:544px;width:25.3px;height:7px;background:#3b4049;border-radius:1px"></div>
<div class="t" style="left:347.80px;top:545.65px;font-size:5px;color:#8a9098;font-weight:normal;font-style:normal;transform:scaleX(0.965);transform-origin:0 0;">Command:</div>
<div class="a" style="left:320px;top:552px;width:24px;height:10.5px;background:#232931;"></div>
<svg class="a" style="left:321.5px;top:553px;" width="4" height="8" viewBox="0 0 4 8"><rect x="0.3" y="0" width="1" height="8" fill="#9aa0a8"/><rect x="2.3" y="0" width="1" height="8" fill="#9aa0a8"/></svg>
<svg class="a" style="left:326.5px;top:554.5px;" width="5" height="5" viewBox="0 0 5 5"><path d="M0.5 0.5 L4.5 4.5 M4.5 0.5 L0.5 4.5" stroke="#c8ccd2" stroke-width="0.9"/></svg>
<svg class="a" style="left:335.5px;top:553.5px;" width="7" height="7" viewBox="0 0 7 7"><path d="M1 6 L4.5 2.5" stroke="#c8ccd2" stroke-width="1.2"/><circle cx="5" cy="2" r="1.6" fill="none" stroke="#c8ccd2" stroke-width="0.9"/></svg>
<div class="a" style="left:344px;top:552px;width:504px;height:10.2px;background:rgba(222,223,224,0.93);"></div>
<svg class="a" style="left:346px;top:554px;" width="10" height="6" viewBox="0 0 10 6"><rect x="0.5" y="0.5" width="7" height="5" fill="none" stroke="#555" stroke-width="0.7"/><rect x="0.5" y="0.5" width="7" height="1.5" fill="#555"/><path d="M8 2 L10 2 L9 3.5Z" fill="#333"/></svg>
<div class="t" style="left:358.80px;top:554.52px;font-size:6.5px;color:#74787e;font-weight:normal;font-style:italic;transform:scaleX(0.824);transform-origin:0 0;">Type  a  command</div>
<div class="t" style="left:843.00px;top:555.54px;font-size:4px;color:#555;font-weight:normal;font-style:normal;transform:scaleX(1.500);transform-origin:0 0;">▴</div>
<svg class="a" style="left:16px;top:563.5px;" width="27" height="12" viewBox="0 0 27 12"><path d="M3 0 H27 L24 12 H0Z" fill="#3a4352"/></svg>
<svg class="a" style="left:6px;top:566px;" width="7" height="6" viewBox="0 0 7 6"><rect x="0" y="0" width="7" height="1.1" fill="#b8bcc2"/><rect x="0" y="2.3" width="7" height="1.1" fill="#b8bcc2"/><rect x="0" y="4.6" width="7" height="1.1" fill="#b8bcc2"/></svg>
<div class="t" style="left:23.00px;top:566.96px;font-size:5.6px;color:#f0f2f5;font-weight:bold;font-style:normal;transform:scaleX(0.897);transform-origin:0 0;">Model</div>
<div class="t" style="left:47.00px;top:566.96px;font-size:5.6px;color:#b8bec8;font-weight:normal;font-style:normal;transform:scaleX(0.845);transform-origin:0 0;">Layout-1</div>
<div class="t" style="left:75.20px;top:566.96px;font-size:5.6px;color:#b8bec8;font-weight:normal;font-style:normal;transform:scaleX(0.849);transform-origin:0 0;">Layout-2</div>
<svg class="a" style="left:70px;top:564px;" width="3" height="10" viewBox="0 0 3 10"><path d="M2.5 0.5 L0.5 9.5" stroke="#3a4250" stroke-width="0.8"/></svg>
<svg class="a" style="left:97.5px;top:564px;" width="3" height="10" viewBox="0 0 3 10"><path d="M2.5 0.5 L0.5 9.5" stroke="#3a4250" stroke-width="0.8"/></svg>
<svg class="a" style="left:114.5px;top:564px;" width="3" height="10" viewBox="0 0 3 10"><path d="M2.5 0.5 L0.5 9.5" stroke="#3a4250" stroke-width="0.8"/></svg>
<svg class="a" style="left:104.5px;top:566px;" width="6" height="6" viewBox="0 0 6 6"><path d="M3 0 V6 M0 3 H6" stroke="#d0d4da" stroke-width="1.1"/></svg>
<div class="a" style="left:382.5px;top:565px;width:84.7px;height:10px;background:#2c333e;"></div>
<div class="t" style="left:390.80px;top:567.76px;font-size:5.6px;color:#d0d4da;font-weight:normal;font-style:normal;transform:scaleX(0.827);transform-origin:0 0;">1545622.3388, 1.2346E+07, 0.0000</div>
<div class="a" style="left:468px;top:565px;width:19px;height:10px;background:#2c333e;"></div>
<div class="t" style="left:469.70px;top:567.76px;font-size:5.6px;color:#d0d4da;font-weight:normal;font-style:normal;transform:scaleX(0.794);transform-origin:0 0;">MODEL</div>
<div class="a" style="left:488px;top:565px;width:282px;height:10px;background:#2c333e;"></div>
<svg class="a" style="left:491px;top:566px;" width="7" height="8" viewBox="0 0 7 8"><path d="M1 1 H6 M1 3.5 H6 M1 6 H6 M1 1 V6 M3.5 1 V6 M6 1 V6" stroke="#aab0b8" stroke-width="0.6"/></svg>
<svg class="a" style="left:499.5px;top:566px;" width="7" height="8" viewBox="0 0 7 8"><path d="M1 1.5 H6 M1 3.5 H6 M1 5.5 H6" stroke="#aab0b8" stroke-width="0.8" stroke-dasharray="1 1"/></svg>
<div class="t" style="left:509.50px;top:568.04px;font-size:4px;color:#c8c8c8;font-weight:normal;font-style:normal;transform:scaleX(1.250);transform-origin:0 0;">▾</div>
<svg class="a" style="left:516px;top:566px;" width="7" height="8" viewBox="0 0 7 8"><rect x="0.5" y="3.5" width="3.5" height="3.5" fill="#fff"/><path d="M3 3 V0.5 H6.5 V3" fill="none" stroke="#ddd" stroke-width="0.7"/></svg>
<div class="a" style="left:524.5px;top:565.3px;width:9px;height:9.4px;background:#4d8fd6;"></div>
<svg class="a" style="left:525.5px;top:566px;" width="7" height="8" viewBox="0 0 7 8"><rect x="1" y="4" width="5" height="2.5" fill="#fff"/><path d="M0.5 1.5 L2.5 3" stroke="#fff" stroke-width="0.8"/></svg>
<svg class="a" style="left:535.5px;top:566px;" width="7" height="8" viewBox="0 0 7 8"><path d="M1 0.5 V6.5 H6.5" fill="none" stroke="#d0d0d0" stroke-width="0.8"/></svg>
<div class="a" style="left:543.3px;top:565.3px;width:9px;height:9.4px;background:#4d8fd6;"></div>
<svg class="a" style="left:544.3px;top:566px;" width="7" height="8" viewBox="0 0 7 8"><circle cx="3.5" cy="4" r="2.5" fill="none" stroke="#fff" stroke-width="0.8" stroke-dasharray="1.5 0.8"/></svg>
<div class="t" style="left:554.50px;top:568.04px;font-size:4px;color:#c8c8c8;font-weight:normal;font-style:normal;transform:scaleX(1.250);transform-origin:0 0;">▾</div>
<svg class="a" style="left:560.5px;top:566px;" width="7" height="8" viewBox="0 0 7 8"><path d="M1 1 L6 6" stroke="#ccc" stroke-width="0.8"/><circle cx="5" cy="5" r="1" fill="#d04040"/></svg>
<div class="t" style="left:570.50px;top:568.04px;font-size:4px;color:#c8c8c8;font-weight:normal;font-style:normal;transform:scaleX(1.250);transform-origin:0 0;">▾</div>
<div class="a" style="left:575.8px;top:565.3px;width:9px;height:9.4px;background:#4d8fd6;"></div>
<svg class="a" style="left:576.8px;top:566px;" width="7" height="8" viewBox="0 0 7 8"><path d="M0.5 6.5 L6.5 0.5" stroke="#fff" stroke-width="0.8"/><path d="M0.5 6.5 H6" stroke="#fff" stroke-width="0.6"/></svg>
<div class="a" style="left:584.5px;top:565.3px;width:9px;height:9.4px;background:#4d8fd6;"></div>
<svg class="a" style="left:585.5px;top:566px;" width="7" height="8" viewBox="0 0 7 8"><rect x="0.5" y="1" width="6" height="5" fill="none" stroke="#fff" stroke-width="0.8"/></svg>
<div class="t" style="left:596.00px;top:568.04px;font-size:4px;color:#c8c8c8;font-weight:normal;font-style:normal;transform:scaleX(1.250);transform-origin:0 0;">▾</div>
<svg class="a" style="left:601.8px;top:566px;" width="7" height="8" viewBox="0 0 7 8"><path d="M0.5 1 H6.5 M0.5 3 H4.5 M0.5 5 H6.5" stroke="#d0d0d0" stroke-width="0.9"/></svg>
<div class="a" style="left:610px;top:565.3px;width:9px;height:9.4px;background:#4d8fd6;"></div>
<svg class="a" style="left:611px;top:566px;" width="7" height="8" viewBox="0 0 7 8"><path d="M0.5 0.5 L6.5 6.5 M6.5 0.5 L0.5 6.5 M3.5 0 V7 M0 3.5 H7" stroke="#fff" stroke-width="0.7"/></svg>
<svg class="a" style="left:621.8px;top:566px;" width="7" height="8" viewBox="0 0 7 8"><circle cx="3.5" cy="4" r="2.8" fill="#3aa040"/><rect x="1" y="0.5" width="4" height="3" fill="#ccc"/></svg>
<svg class="a" style="left:630.5px;top:566px;" width="7" height="8" viewBox="0 0 7 8"><path d="M1 6.5 L1.5 1.5 L6.5 0.5 L6 5.5Z" fill="none" stroke="#bbb" stroke-width="0.8"/></svg>
<div class="t" style="left:640.50px;top:568.04px;font-size:4px;color:#c8c8c8;font-weight:normal;font-style:normal;transform:scaleX(1.250);transform-origin:0 0;">▾</div>
<div class="a" style="left:646.5px;top:565.3px;width:9px;height:9.4px;background:#4d8fd6;"></div>
<svg class="a" style="left:647.5px;top:566px;" width="7" height="8" viewBox="0 0 7 8"><rect x="1" y="1" width="5" height="5" fill="none" stroke="#fff" stroke-width="0.8" stroke-dasharray="1.2 0.6"/></svg>
<svg class="a" style="left:656.8px;top:566px;" width="7" height="8" viewBox="0 0 7 8"><rect x="1" y="1" width="5" height="5" fill="none" stroke="#ccc" stroke-width="0.8"/><rect x="0" y="4" width="3" height="3" fill="#4a90d0"/></svg>
<div class="t" style="left:667.50px;top:568.04px;font-size:4px;color:#c8c8c8;font-weight:normal;font-style:normal;transform:scaleX(1.250);transform-origin:0 0;">▾</div>
<svg class="a" style="left:673px;top:566px;" width="7" height="8" viewBox="0 0 7 8"><circle cx="3.5" cy="3.5" r="2.7" fill="none" stroke="#ccc" stroke-width="0.8"/><circle cx="3.5" cy="3.5" r="1" fill="#d04060"/></svg>
<div class="t" style="left:683.50px;top:568.04px;font-size:4px;color:#c8c8c8;font-weight:normal;font-style:normal;transform:scaleX(1.250);transform-origin:0 0;">▾</div>
<div class="a" style="left:689px;top:565.3px;width:9px;height:9.4px;background:#4d8fd6;"></div>
<svg class="a" style="left:690px;top:566px;" width="7" height="8" viewBox="0 0 7 8"><path d="M0.5 6.5 L3.5 0.5 L6.5 6.5 M2 4 H5" fill="none" stroke="#fff" stroke-width="0.9"/></svg>
<svg class="a" style="left:700px;top:566px;" width="7" height="8" viewBox="0 0 7 8"><path d="M0.5 6.5 L3.5 0.5 L6.5 6.5 M2 4 H5" fill="none" stroke="#d0d0d0" stroke-width="0.9"/></svg>
<svg class="a" style="left:709px;top:566px;" width="7" height="8" viewBox="0 0 7 8"><path d="M0.5 6.5 L3.5 0.5 L6.5 6.5" fill="none" stroke="#d0d0d0" stroke-width="0.9"/></svg>
<div class="t" style="left:718.00px;top:567.56px;font-size:5.6px;color:#d0d4da;font-weight:normal;font-style:normal;transform:scaleX(0.843);transform-origin:0 0;">1 : 40 / 2.5%</div>
<div class="t" style="left:746.50px;top:568.04px;font-size:4px;color:#c8c8c8;font-weight:normal;font-style:normal;transform:scaleX(1.250);transform-origin:0 0;">▾</div>
<svg class="a" style="left:753px;top:565.5px;" width="8" height="9" viewBox="0 0 8 9"><circle cx="4" cy="4.5" r="2.5" fill="none" stroke="#d8d8d8" stroke-width="1.6" stroke-dasharray="1.2 0.8"/><circle cx="4" cy="4.5" r="1.2" fill="#d8d8d8"/></svg>
<div class="t" style="left:763.50px;top:568.04px;font-size:4px;color:#c8c8c8;font-weight:normal;font-style:normal;transform:scaleX(1.250);transform-origin:0 0;">▾</div>
<div class="a" style="left:767px;top:565px;width:103px;height:10px;background:#2c333e;"></div>
<svg class="a" style="left:769px;top:566px;" width="7" height="8" viewBox="0 0 7 8"><path d="M3.5 0.5 V7.5 M0 4 H7" stroke="#d0d4da" stroke-width="1"/></svg>
<div class="a" style="left:780.5px;top:566.3px;width:4px;height:7px;background:#cfd3d8;"></div>
<div class="t" style="left:790.00px;top:567.76px;font-size:5.6px;color:#d0d4da;font-weight:normal;font-style:normal;transform:scaleX(0.890);transform-origin:0 0;">Decimal</div>
<div class="t" style="left:813.00px;top:568.04px;font-size:4px;color:#c8c8c8;font-weight:normal;font-style:normal;transform:scaleX(1.250);transform-origin:0 0;">▾</div>
<svg class="a" style="left:819px;top:566px;" width="7" height="8" viewBox="0 0 7 8"><rect x="0.5" y="0.5" width="6" height="7" fill="none" stroke="#aaa" stroke-width="0.7"/><path d="M1.5 2.5 H5.5 M1.5 4.5 H5.5" stroke="#aaa" stroke-width="0.5"/></svg>
<svg class="a" style="left:830.5px;top:566px;" width="7" height="8" viewBox="0 0 7 8"><rect x="0.5" y="0.5" width="6" height="6" fill="none" stroke="#ccc" stroke-width="0.7"/><rect x="3" y="4" width="4" height="3.5" fill="#ddd"/></svg>
<div class="t" style="left:840.50px;top:568.04px;font-size:4px;color:#c8c8c8;font-weight:normal;font-style:normal;transform:scaleX(1.250);transform-origin:0 0;">▾</div>
<div class="a" style="left:845px;top:565px;width:30px;height:10px;background:#2c333e;"></div>
<svg class="a" style="left:848px;top:566px;" width="7" height="8" viewBox="0 0 7 8"><ellipse cx="3.5" cy="4.5" rx="3" ry="2.2" fill="#5ab0e8"/><rect x="2" y="1" width="3" height="2" fill="#ddd"/></svg>
<div class="t" style="left:858.00px;top:567.76px;font-size:5.6px;color:#d0d4da;font-weight:normal;font-style:normal;transform:scaleX(0.877);transform-origin:0 0;">3.5000</div>
<div class="a" style="left:876px;top:565px;width:148px;height:10px;background:#2c333e;"></div>
<svg class="a" style="left:878.5px;top:566px;" width="7" height="8" viewBox="0 0 7 8"><path d="M1 6 L6 1" stroke="#ddd" stroke-width="1.4"/><circle cx="2" cy="2" r="1.2" fill="none" stroke="#ddd" stroke-width="0.6"/></svg>
<div class="t" style="left:889.00px;top:568.04px;font-size:4px;color:#c8c8c8;font-weight:normal;font-style:normal;transform:scaleX(1.250);transform-origin:0 0;">▾</div>
<div class="a" style="left:892.5px;top:565.3px;width:9px;height:9.4px;background:#4d8fd6;"></div>
<svg class="a" style="left:893.5px;top:566px;" width="7" height="8" viewBox="0 0 7 8"><path d="M1 6 L5 1.5 L6.5 3 L2.5 7Z" fill="#fff"/></svg>
<svg class="a" style="left:903.5px;top:566px;" width="7" height="8" viewBox="0 0 7 8"><rect x="0.5" y="0.5" width="4" height="4" fill="none" stroke="#999" stroke-width="0.6"/><rect x="3" y="3" width="4" height="4" fill="none" stroke="#999" stroke-width="0.6"/></svg>
<div class="a" style="left:912.5px;top:565.3px;width:9px;height:9.4px;background:#4d8fd6;"></div>
<svg class="a" style="left:913.5px;top:566px;" width="7" height="8" viewBox="0 0 7 8"><circle cx="3.5" cy="3.5" r="2.8" fill="none" stroke="#fff" stroke-width="0.8"/><path d="M1 3.5 H6" stroke="#fff" stroke-width="0.6"/></svg>
<div class="t" style="left:923.50px;top:567.76px;font-size:5.6px;color:#d0d4da;font-weight:normal;font-style:normal;transform:scaleX(0.872);transform-origin:0 0;">UDH - EAM Design</div>
<div class="t" style="left:967.50px;top:568.04px;font-size:4px;color:#c8c8c8;font-weight:normal;font-style:normal;transform:scaleX(1.250);transform-origin:0 0;">▾</div>
<svg class="a" style="left:974.5px;top:566px;" width="7" height="8" viewBox="0 0 7 8"><rect x="0.5" y="0.5" width="6" height="6" fill="#d8d8d8"/><rect x="3.5" y="3.5" width="3.5" height="3.5" fill="#e0a030"/></svg>
<svg class="a" style="left:983.5px;top:566px;" width="7" height="8" viewBox="0 0 7 8"><path d="M0.5 1 L3.5 6.5 L6.5 1" fill="none" stroke="#4a8ee0" stroke-width="1.3"/></svg>
<svg class="a" style="left:993.5px;top:566px;" width="7" height="8" viewBox="0 0 7 8"><rect x="0.5" y="2" width="6" height="5" fill="#4a8ee0"/><circle cx="3.5" cy="2" r="1.6" fill="#e0b030"/></svg>
<svg class="a" style="left:1005px;top:566px;" width="7" height="8" viewBox="0 0 7 8"><rect x="0.5" y="1" width="6.5" height="5" fill="none" stroke="#ccc" stroke-width="0.8"/><rect x="2" y="2.5" width="3.5" height="2" fill="#ccc"/></svg>
<svg class="a" style="left:1015.5px;top:566px;" width="7" height="7" viewBox="0 0 7 7"><path d="M0 1 H7 M0 3.5 H7 M0 6 H7" stroke="#d0d4da" stroke-width="1"/></svg>
</body></html>
